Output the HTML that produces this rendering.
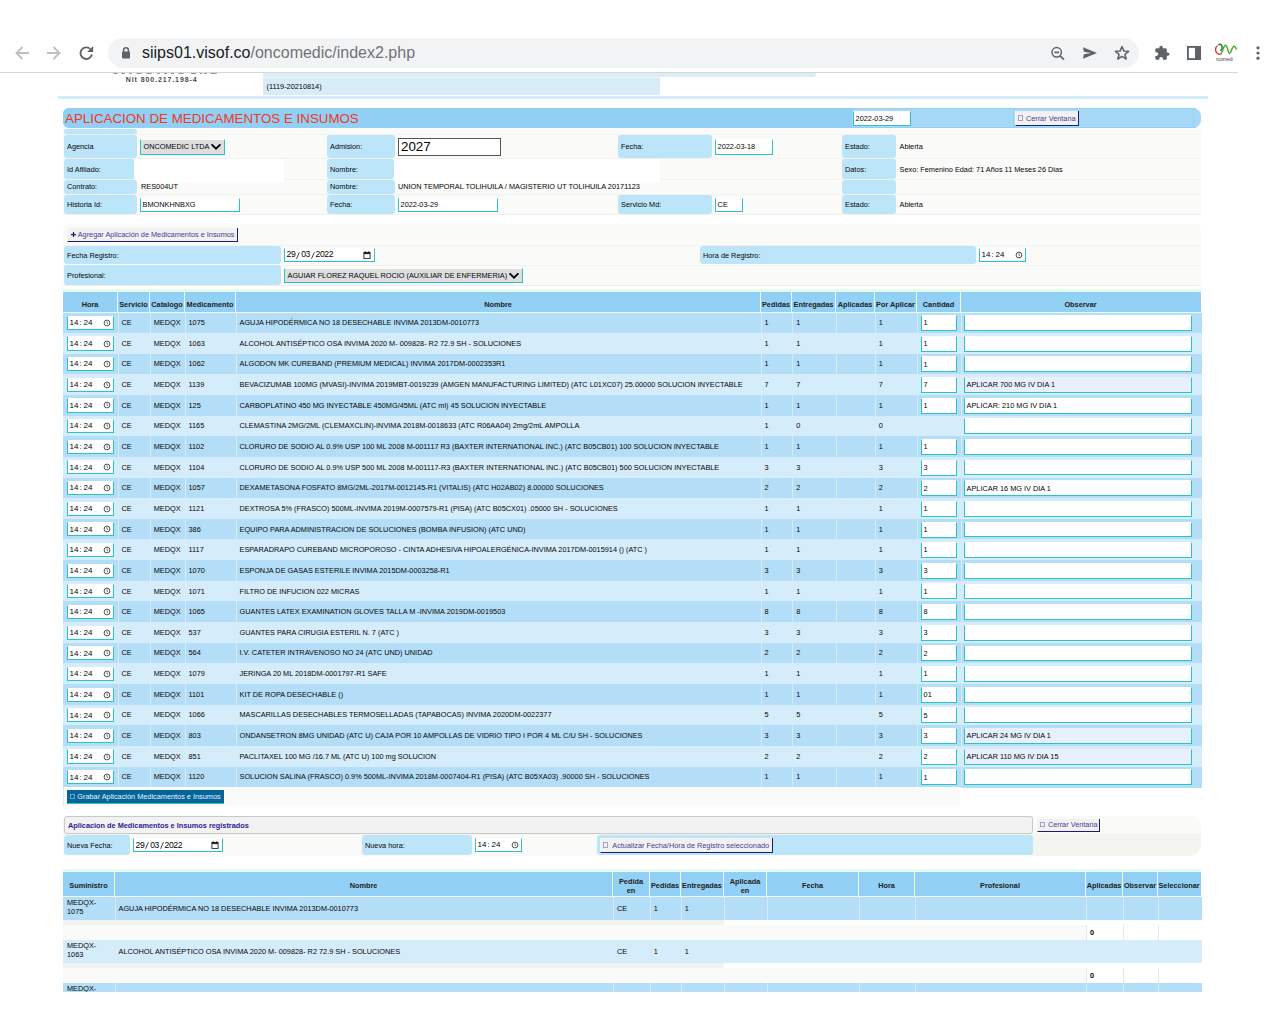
<!DOCTYPE html>
<html><head><meta charset="utf-8"><style>
html,body{margin:0;padding:0;background:#fff;width:1280px;height:1024px;overflow:hidden;position:relative}
body>div,body>svg{position:absolute}
.t{font-family:"Liberation Sans", sans-serif;white-space:nowrap}
.sq{display:inline-block;width:3.1px;height:3.3px;border:0.5px solid currentColor;opacity:.45;margin-right:2.6px;vertical-align:-0.2px}
</style></head><body>
<div style="left:0px;top:0px;width:1280px;height:72px;background:#ffffff;"></div>
<div style="left:0px;top:72px;width:1238px;height:1px;background:#d6d6d6;"></div>
<div style="left:108px;top:38px;width:1031px;height:30px;background:#f1f3f4;border-radius:15px"></div>
<svg style="position:absolute;left:14px;top:45px" width="16" height="16" viewBox="0 0 16 16"><path d="M15 8H2.5M8.5 2L2.5 8L8.5 14" fill="none" stroke="#bdc0c4" stroke-width="1.9"/></svg>
<svg style="position:absolute;left:46px;top:45px" width="16" height="16" viewBox="0 0 16 16"><path d="M1 8H13.5M7.5 2L13.5 8L7.5 14" fill="none" stroke="#bdc0c4" stroke-width="1.9"/></svg>
<svg style="position:absolute;left:78px;top:45px" width="16" height="16" viewBox="0 0 16 16"><path d="M13.9 9.5A5.8 5.8 0 1 1 12.2 3.9" fill="none" stroke="#5f6368" stroke-width="1.9"/><path d="M9.2 6.9L15.1 1.1V6.9Z" fill="#5f6368"/></svg>
<svg style="position:absolute;left:121px;top:46px" width="10" height="13" viewBox="0 0 10 13"><path d="M2.6 6V4.2A2.4 2.4 0 0 1 7.4 4.2V6" fill="none" stroke="#5f6368" stroke-width="1.5"/><rect x="1" y="5.6" width="8" height="6.8" rx="0.8" fill="#5f6368"/></svg>
<div class="t" style="left:142px;top:42.5px;font-size:16px;line-height:20px;color:#202124;letter-spacing:0px">siips01.visof.co<span style="color:#6f7378">/oncomedic/index2.php</span></div>
<svg style="position:absolute;left:1050px;top:45.5px" width="16" height="16" viewBox="0 0 16 16"><circle cx="6.7" cy="6.3" r="4.7" fill="none" stroke="#5f6368" stroke-width="1.5"/><path d="M4.4 6.3H9M10.1 9.8L14 13.7" fill="none" stroke="#5f6368" stroke-width="1.7"/></svg>
<svg style="position:absolute;left:1082px;top:45px" width="16" height="16" viewBox="0 0 16 16"><path d="M1 2.2L15 8L1 13.8L1.9 9.2L9 8L1.9 6.8Z" fill="#5f6368"/></svg>
<svg style="position:absolute;left:1114px;top:45px" width="16" height="16" viewBox="0 0 16 16"><path d="M8 1.6L9.9 6.1L14.6 6.3L10.9 9.3L12.2 14L8 11.3L3.8 14L5.1 9.3L1.4 6.3L6.1 6.1Z" fill="none" stroke="#5f6368" stroke-width="1.5" stroke-linejoin="round"/></svg>
<svg style="position:absolute;left:1153.9px;top:45.2px" width="16.2" height="16.2" viewBox="0 0 24 24"><path d="M20.5 11H19V7c0-1.1-.9-2-2-2h-4V3.5C13 2.12 11.88 1 10.5 1S8 2.12 8 3.5V5H4c-1.1 0-1.99.9-1.99 2v3.8H3.5c1.49 0 2.7 1.21 2.7 2.7s-1.21 2.7-2.7 2.7H2V20c0 1.1.9 2 2 2h3.8v-1.5c0-1.490 1.21-2.7 2.7-2.7 1.49 0 2.7 1.21 2.7 2.7V22H17c1.1 0 2-.9 2-2v-4h1.5c1.38 0 2.5-1.12 2.5-2.5S21.88 11 20.5 11z" fill="#5f6368"/></svg>
<svg style="position:absolute;left:1186px;top:45px" width="16" height="16" viewBox="0 0 16 16"><rect x="1.9" y="1.9" width="12.2" height="12.2" fill="none" stroke="#5f6368" stroke-width="1.9"/><rect x="9" y="2" width="5" height="12" fill="#5f6368"/></svg>
<svg style="position:absolute;left:1210px;top:40px" width="32" height="26" viewBox="0 0 32 26"><path d="M7.6 5.8C4.6 7.5 4.4 13.8 10.7 14.5" fill="none" stroke="#d8322a" stroke-width="1.3"/><path d="M8.4 5.1C10 3.5 12.3 4.5 12.2 8.2C12.1 9.6 11.1 10.3 10.2 10.2" fill="none" stroke="#1d7f2a" stroke-width="1.5"/><path d="M10.7 14.3C12.5 12 13.5 5.3 15.7 5.3C17.5 5.3 18 13.5 19.5 13.5C21 13.5 22 6.3 24.2 6.3C25.4 6.3 26 8 26.4 9.6" fill="none" stroke="#4fa82c" stroke-width="1.5"/><text x="6" y="20.6" font-size="4.6" font-family="Liberation Sans" fill="#444" letter-spacing="-0.1">ncomedi</text></svg>
<svg style="position:absolute;left:1255px;top:45px" width="6" height="16" viewBox="0 0 6 16"><circle cx="3" cy="2.8" r="1.6" fill="#5f6368"/><circle cx="3" cy="8" r="1.6" fill="#5f6368"/><circle cx="3" cy="13.2" r="1.6" fill="#5f6368"/></svg>
<div style="left:112.50px;top:73px;width:5.15px;height:1.4px;background:#8c8c8c;border-radius:0 0 50% 50%"></div>
<div style="left:121.40px;top:73px;width:3.28px;height:1.4px;background:#8c8c8c;border-radius:0 0 50% 50%"></div>
<div style="left:128.90px;top:73px;width:3.28px;height:1.4px;background:#8c8c8c;border-radius:0 0 50% 50%"></div>
<div style="left:136.40px;top:73px;width:6.09px;height:1.4px;background:#8c8c8c;border-radius:0 0 50% 50%"></div>
<div style="left:146.24px;top:73px;width:5.62px;height:1.4px;background:#8c8c8c;border-radius:0 0 50% 50%"></div>
<div style="left:157.01px;top:73px;width:3.28px;height:1.4px;background:#8c8c8c;border-radius:0 0 50% 50%"></div>
<div style="left:163.58px;top:73px;width:3.75px;height:1.4px;background:#8c8c8c;border-radius:0 0 50% 50%"></div>
<div style="left:170.60px;top:73px;width:3.75px;height:1.4px;background:#8c8c8c;border-radius:0 0 50% 50%"></div>
<div style="left:178.10px;top:73px;width:5.62px;height:1.4px;background:#8c8c8c;border-radius:0 0 50% 50%"></div>
<div style="left:190.75px;top:73px;width:5.62px;height:1.4px;background:#8c8c8c;border-radius:0 0 50% 50%"></div>
<div style="left:199.66px;top:73px;width:2.81px;height:1.4px;background:#8c8c8c;border-radius:0 0 50% 50%"></div>
<div style="left:203.88px;top:73px;width:2.81px;height:1.4px;background:#8c8c8c;border-radius:0 0 50% 50%"></div>
<div style="left:209.97px;top:73px;width:7.50px;height:1.4px;background:#8c8c8c;border-radius:0 0 50% 50%"></div>
<div class="t" style="left:125.8px;top:74.84px;font-size:7px;line-height:9.1px;color:#4a4a4a;font-weight:bold;letter-spacing:0.9px">Nit 800.217.198-4</div>
<div style="left:263px;top:73px;width:553px;height:4px;background:#dcedf8;border-bottom-right-radius:3px"></div>
<div style="left:263px;top:77.8px;width:397px;height:17.5px;background:#d8ecf8;"></div>
<div style="left:263px;top:77px;width:397px;height:0.7999999999999972px;background:#eef6fb;"></div>
<div class="t" style="left:266.5px;top:82.14px;font-size:7.33px;line-height:9.53px;color:#050505;font-weight:normal;">(1119-20210814)</div>
<div style="left:58px;top:96px;width:1150px;height:3px;background:#d4ebf8;"></div>
<div style="left:63px;top:108px;width:1138px;height:20px;background:#a6d9f7;border-radius:6px 8px 8px 6px"></div>
<div style="left:63px;top:108px;width:789px;height:20px;background:#92cff4;border-radius:6px 0 0 6px"></div>
<div style="left:852px;top:108px;width:344px;height:1px;background:#94d0f5;"></div>
<div style="left:852px;top:127px;width:344px;height:1px;background:#94d0f5;"></div>
<div style="left:1013px;top:108px;width:1px;height:20px;background:#98d2f4;"></div>
<div style="left:1193px;top:108px;width:1px;height:20px;background:#98d2f4;"></div>
<div class="t" style="left:65px;top:110.06px;font-size:13.33px;line-height:17.33px;color:#ee3a22;font-weight:normal;">APLICACION DE MEDICAMENTOS E INSUMOS</div>
<div style="left:853px;top:111px;width:58px;height:14.5px;background:#fff;box-sizing:border-box;border:1px solid #2cc3c3;border-top-color:#fff"></div>
<div class="t" style="left:855.6px;top:113.57px;font-size:7.33px;line-height:9.53px;color:#050505;font-weight:normal;">2022-03-29</div>
<div style="left:1015px;top:111px;width:64px;height:15px;background:#f1f1f1;box-sizing:border-box;border-right:1.5px solid #1c1c78;border-bottom:1.5px solid #1c1c78;border-left:1px solid #f8f8f8"></div>
<div class="t" style="left:1018.2px;top:113.52px;font-size:7.33px;line-height:9.53px;color:#4a3d96;font-weight:normal;"><span class="sq"></span>Cerrar Ventana</div>
<div style="left:63px;top:128px;width:1138px;height:87px;background:#fafaf8;border-radius:4px"></div>
<div style="left:63px;top:134px;width:1138px;height:0.8000000000000114px;background:#f1f1ed;"></div>
<div style="left:63px;top:158.2px;width:1138px;height:0.8000000000000114px;background:#f1f1ed;"></div>
<div style="left:63px;top:179.2px;width:1138px;height:0.8000000000000114px;background:#f1f1ed;"></div>
<div style="left:63px;top:194.2px;width:1138px;height:0.8000000000000114px;background:#f1f1ed;"></div>
<div style="left:63px;top:214.3px;width:1138px;height:0.6999999999999886px;background:#f1f1ec;"></div>
<div style="left:64px;top:129px;width:73px;height:5px;background:#bde5fa;border-radius:3px"></div>
<div style="left:64px;top:135px;width:73px;height:23px;background:#bde5fa;border-radius:3px"></div>
<div class="t" style="left:67px;top:141.82px;font-size:7.33px;line-height:9.53px;color:#050505;font-weight:normal;">Agencia</div>
<div style="left:140px;top:139px;width:85px;height:16px;background:#dedede;box-sizing:border-box;border:1px solid #2cc3c3;border-top-color:#fff"></div>
<div class="t" style="left:143.5px;top:142.12px;font-size:7.33px;line-height:9.53px;color:#050505;font-weight:normal;">ONCOMEDIC LTDA</div>
<svg style="position:absolute;left:209.7px;top:142.8px" width="12" height="8" viewBox="0 0 12 8"><path d="M1.6 1.4L6 5.6L10.4 1.4" fill="none" stroke="#000" stroke-width="1.9"/></svg>
<div style="left:327px;top:135px;width:68px;height:23px;background:#bde5fa;border-radius:3px"></div>
<div class="t" style="left:330px;top:141.82px;font-size:7.33px;line-height:9.53px;color:#050505;font-weight:normal;">Admision:</div>
<div style="left:398px;top:137.5px;width:103px;height:18.5px;box-sizing:border-box;border:1.3px solid #555;background:#fff"></div>
<div class="t" style="left:401px;top:137.76px;font-size:13.33px;line-height:17.33px;color:#000;font-weight:normal;">2027</div>
<div style="left:618px;top:135px;width:94px;height:23px;background:#bde5fa;border-radius:3px"></div>
<div class="t" style="left:621px;top:141.82px;font-size:7.33px;line-height:9.53px;color:#050505;font-weight:normal;">Fecha:</div>
<div style="left:715px;top:139.3px;width:58px;height:15.699999999999989px;background:#fff;box-sizing:border-box;border:1px solid #2cc3c3;border-top-color:#fff"></div>
<div class="t" style="left:717.6px;top:141.57px;font-size:7.33px;line-height:9.53px;color:#050505;font-weight:normal;">2022-03-18</div>
<div style="left:842px;top:135px;width:54px;height:23px;background:#bde5fa;border-radius:3px"></div>
<div class="t" style="left:845px;top:141.82px;font-size:7.33px;line-height:9.53px;color:#050505;font-weight:normal;">Estado:</div>
<div class="t" style="left:899.5px;top:142.34px;font-size:7.33px;line-height:9.53px;color:#050505;font-weight:normal;">Abierta</div>
<div style="left:64px;top:159px;width:73px;height:20px;background:#bde5fa;border-radius:3px"></div>
<div class="t" style="left:67px;top:165.22px;font-size:7.33px;line-height:9.53px;color:#050505;font-weight:normal;">Id Afiliado:</div>
<div style="left:134px;top:159px;width:150px;height:23px;background:#ffffff;"></div>
<div style="left:327px;top:159px;width:67px;height:20px;background:#bde5fa;border-radius:3px"></div>
<div class="t" style="left:330px;top:165.22px;font-size:7.33px;line-height:9.53px;color:#050505;font-weight:normal;">Nombre:</div>
<div style="left:394px;top:159px;width:266px;height:23px;background:#ffffff;"></div>
<div style="left:842px;top:159px;width:54px;height:20px;background:#bde5fa;border-radius:3px"></div>
<div class="t" style="left:845px;top:165.22px;font-size:7.33px;line-height:9.53px;color:#050505;font-weight:normal;">Datos:</div>
<div class="t" style="left:899.5px;top:164.94px;font-size:7.33px;line-height:9.53px;color:#050505;font-weight:normal;">Sexo: Femenino Edad: 71 Años 11 Meses 26 Dias</div>
<div style="left:64px;top:180.3px;width:73px;height:13.699999999999989px;background:#bde5fa;border-radius:3px"></div>
<div class="t" style="left:67px;top:182.47px;font-size:7.33px;line-height:9.53px;color:#050505;font-weight:normal;">Contrato:</div>
<div class="t" style="left:141px;top:182.44px;font-size:7.33px;line-height:9.53px;color:#050505;font-weight:normal;">RES004UT</div>
<div style="left:327px;top:180.3px;width:68px;height:13.699999999999989px;background:#bde5fa;border-radius:3px"></div>
<div class="t" style="left:330px;top:182.47px;font-size:7.33px;line-height:9.53px;color:#050505;font-weight:normal;">Nombre:</div>
<div class="t" style="left:398px;top:182.44px;font-size:7.33px;line-height:9.53px;color:#050505;font-weight:normal;">UNION TEMPORAL TOLIHUILA / MAGISTERIO UT TOLIHUILA 20171123</div>
<div style="left:842px;top:180.3px;width:54px;height:13.699999999999989px;background:#bde5fa;border-radius:3px"></div>
<div style="left:64px;top:195.2px;width:73px;height:18.80000000000001px;background:#bde5fa;border-radius:3px"></div>
<div class="t" style="left:67px;top:199.92px;font-size:7.33px;line-height:9.53px;color:#050505;font-weight:normal;">Historia Id:</div>
<div style="left:140px;top:197.5px;width:100px;height:14.5px;background:#fff;box-sizing:border-box;border:1px solid #2cc3c3;border-top-color:#fff"></div>
<div class="t" style="left:142.6px;top:200.07px;font-size:7.33px;line-height:9.53px;color:#050505;font-weight:normal;">BMONKHNBXG</div>
<div style="left:327px;top:195.2px;width:68px;height:18.80000000000001px;background:#bde5fa;border-radius:3px"></div>
<div class="t" style="left:330px;top:199.92px;font-size:7.33px;line-height:9.53px;color:#050505;font-weight:normal;">Fecha:</div>
<div style="left:398px;top:197.5px;width:100px;height:14.5px;background:#fff;box-sizing:border-box;border:1px solid #2cc3c3;border-top-color:#fff"></div>
<div class="t" style="left:400.6px;top:200.07px;font-size:7.33px;line-height:9.53px;color:#050505;font-weight:normal;">2022-03-29</div>
<div style="left:618px;top:195.2px;width:94px;height:18.80000000000001px;background:#bde5fa;border-radius:3px"></div>
<div class="t" style="left:621px;top:199.92px;font-size:7.33px;line-height:9.53px;color:#050505;font-weight:normal;">Servicio Md:</div>
<div style="left:715px;top:197.5px;width:28px;height:14.5px;background:#fff;box-sizing:border-box;border:1px solid #2cc3c3;border-top-color:#fff"></div>
<div class="t" style="left:717.6px;top:200.07px;font-size:7.33px;line-height:9.53px;color:#050505;font-weight:normal;">CE</div>
<div style="left:842px;top:195.2px;width:54px;height:18.80000000000001px;background:#bde5fa;border-radius:3px"></div>
<div class="t" style="left:845px;top:199.92px;font-size:7.33px;line-height:9.53px;color:#050505;font-weight:normal;">Estado:</div>
<div class="t" style="left:899.5px;top:199.74px;font-size:7.33px;line-height:9.53px;color:#050505;font-weight:normal;">Abierta</div>
<div style="left:63px;top:224px;width:1138px;height:62px;background:#fafaf8;border-radius:6px"></div>
<div style="left:63px;top:244.5px;width:1138px;height:0.5px;background:#f2f2ef;"></div>
<div style="left:63px;top:264.8px;width:1138px;height:0.5px;background:#f2f2ef;"></div>
<div style="left:63px;top:285.2px;width:1138px;height:0.8000000000000114px;background:#efefea;"></div>
<div style="left:67px;top:227.5px;width:171px;height:14.5px;background:#f1f1f1;box-sizing:border-box;border-right:1.5px solid #1c1c78;border-bottom:1.5px solid #1c1c78;border-left:1px solid #f8f8f8"></div>
<div class="t" style="left:70.2px;top:229.77px;font-size:7.33px;line-height:9.53px;color:#4a3d96;font-weight:normal;"></div>
<div class="t" style="left:77.7px;top:229.94px;font-size:7.33px;line-height:9.53px;color:#4a3d96;font-weight:normal;">Agregar Aplicación de Medicamentos e Insumos</div>
<svg style="position:absolute;left:70.8px;top:232.1px" width="5" height="5" viewBox="0 0 5 5"><path d="M2.5 0V5M0 2.5H5" stroke="#1c1c78" stroke-width="1.25"/></svg>
<div style="left:64px;top:246px;width:217px;height:18px;background:#bde5fa;border-radius:3px"></div>
<div class="t" style="left:67px;top:251.22px;font-size:7.33px;line-height:9.53px;color:#050505;font-weight:normal;">Fecha Registro:</div>
<div style="left:284px;top:248px;width:91px;height:14px;background:#fff;box-sizing:border-box;border:1px solid #2cc3c3;border-top-color:#fff"></div>
<div class="t" style="left:286.5px;top:249.49px;font-size:8.6px;line-height:11.18px;color:#050505;font-weight:normal;letter-spacing:-0.4px">29</div>
<div class="t" style="left:301.2px;top:249.49px;font-size:8.6px;line-height:11.18px;color:#050505;font-weight:normal;letter-spacing:-0.4px">03</div>
<div class="t" style="left:315.6px;top:249.49px;font-size:8.6px;line-height:11.18px;color:#050505;font-weight:normal;letter-spacing:-0.4px">2022</div>
<svg style="position:absolute;left:296.20px;top:251.60px" width="4" height="7" viewBox="0 0 4 7"><path d="M0.5 6.8L3.4 0.2" stroke="#222" stroke-width="0.85"/></svg>
<svg style="position:absolute;left:310.90px;top:251.60px" width="4" height="7" viewBox="0 0 4 7"><path d="M0.5 6.8L3.4 0.2" stroke="#222" stroke-width="0.85"/></svg>
<svg style="position:absolute;left:363.4px;top:251.0px" width="8" height="8" viewBox="0 0 8 8"><rect x="0.9" y="1.4" width="6.2" height="6" fill="none" stroke="#222" stroke-width="0.9"/><rect x="0.9" y="1.2" width="6.2" height="1.9" fill="#222"/><rect x="1.8" y="0.2" width="0.9" height="1.4" fill="#222"/><rect x="5.3" y="0.2" width="0.9" height="1.4" fill="#222"/></svg>
<div style="left:700px;top:246.3px;width:276px;height:17.69999999999999px;background:#bde5fa;border-radius:3px"></div>
<div class="t" style="left:703px;top:251.37px;font-size:7.33px;line-height:9.53px;color:#050505;font-weight:normal;">Hora de Registro:</div>
<div style="left:979px;top:248px;width:47px;height:14px;background:#fff;box-sizing:border-box;border:1px solid #2cc3c3;border-top-color:#fff"></div>
<div class="t" style="left:981.6px;top:250.31px;font-size:8px;line-height:10.4px;color:#050505;font-weight:normal;">14</div>
<div class="t" style="left:991.6px;top:250.31px;font-size:8px;line-height:10.4px;color:#050505;font-weight:normal;">:</div>
<div class="t" style="left:995.6px;top:250.31px;font-size:8px;line-height:10.4px;color:#050505;font-weight:normal;">24</div>
<svg style="position:absolute;left:1015px;top:251.0px" width="8" height="8" viewBox="0 0 8 8"><circle cx="4" cy="4" r="2.9" fill="none" stroke="#333" stroke-width="0.85"/><path d="M4 2.3V4.2L5 5" fill="none" stroke="#333" stroke-width="0.7"/></svg>
<div style="left:64px;top:265.3px;width:217px;height:19.69999999999999px;background:#bde5fa;border-radius:3px"></div>
<div class="t" style="left:67px;top:271.37px;font-size:7.33px;line-height:9.53px;color:#050505;font-weight:normal;">Profesional:</div>
<div style="left:284px;top:268px;width:239px;height:15px;background:#dedede;box-sizing:border-box;border:1px solid #2cc3c3;border-top-color:#fff"></div>
<div class="t" style="left:287.5px;top:270.82px;font-size:7.33px;line-height:9.53px;color:#050505;font-weight:normal;">AGUIAR FLOREZ RAQUEL ROCIO (AUXILIAR DE ENFERMERIA)</div>
<svg style="position:absolute;left:507.70000000000005px;top:271.5px" width="12" height="8" viewBox="0 0 12 8"><path d="M1.6 1.4L6 5.6L10.4 1.4" fill="none" stroke="#000" stroke-width="1.9"/></svg>
<div style="left:63px;top:289px;width:1138px;height:3px;background:#e4fcee;"></div>
<div style="left:63px;top:292px;width:1138px;height:20px;background:#92d0f5;"></div>
<div style="left:117px;top:292px;width:1px;height:20px;background:#eefaf6;"></div>
<div style="left:149px;top:292px;width:1px;height:20px;background:#eefaf6;"></div>
<div style="left:184px;top:292px;width:1px;height:20px;background:#eefaf6;"></div>
<div style="left:235px;top:292px;width:1px;height:20px;background:#eefaf6;"></div>
<div style="left:760px;top:292px;width:1px;height:20px;background:#eefaf6;"></div>
<div style="left:791px;top:292px;width:1px;height:20px;background:#eefaf6;"></div>
<div style="left:835px;top:292px;width:1px;height:20px;background:#eefaf6;"></div>
<div style="left:874px;top:292px;width:1px;height:20px;background:#eefaf6;"></div>
<div style="left:916px;top:292px;width:1px;height:20px;background:#eefaf6;"></div>
<div style="left:960px;top:292px;width:1px;height:20px;background:#eefaf6;"></div>
<div class="t" style="left:63px;width:54px;text-align:center;top:299.74px;font-size:7.33px;line-height:9.53px;color:#222;font-weight:bold">Hora</div>
<div class="t" style="left:118px;width:31px;text-align:center;top:299.74px;font-size:7.33px;line-height:9.53px;color:#222;font-weight:bold">Servicio</div>
<div class="t" style="left:150px;width:34px;text-align:center;top:299.74px;font-size:7.33px;line-height:9.53px;color:#222;font-weight:bold">Catalogo</div>
<div class="t" style="left:185px;width:50px;text-align:center;top:299.74px;font-size:7.33px;line-height:9.53px;color:#222;font-weight:bold">Medicamento</div>
<div class="t" style="left:236px;width:524px;text-align:center;top:299.74px;font-size:7.33px;line-height:9.53px;color:#222;font-weight:bold">Nombre</div>
<div class="t" style="left:761px;width:30px;text-align:center;top:299.74px;font-size:7.33px;line-height:9.53px;color:#222;font-weight:bold">Pedidas</div>
<div class="t" style="left:792px;width:43px;text-align:center;top:299.74px;font-size:7.33px;line-height:9.53px;color:#222;font-weight:bold">Entregadas</div>
<div class="t" style="left:836px;width:38px;text-align:center;top:299.74px;font-size:7.33px;line-height:9.53px;color:#222;font-weight:bold">Aplicadas</div>
<div class="t" style="left:875px;width:41px;text-align:center;top:299.74px;font-size:7.33px;line-height:9.53px;color:#222;font-weight:bold">Por Aplicar</div>
<div class="t" style="left:917px;width:43px;text-align:center;top:299.74px;font-size:7.33px;line-height:9.53px;color:#222;font-weight:bold">Cantidad</div>
<div class="t" style="left:961px;width:239px;text-align:center;top:299.74px;font-size:7.33px;line-height:9.53px;color:#222;font-weight:bold">Observar</div>
<div style="left:63px;top:312.30px;width:1139px;height:20.95px;background:#b4def7"></div>
<div style="left:118px;top:312.30px;width:1px;height:20.95px;background:#d5ecfa"></div>
<div style="left:150px;top:312.30px;width:1px;height:20.95px;background:#d5ecfa"></div>
<div style="left:185px;top:312.30px;width:1px;height:20.95px;background:#d5ecfa"></div>
<div style="left:236px;top:312.30px;width:1px;height:20.95px;background:#d5ecfa"></div>
<div style="left:761px;top:312.30px;width:1px;height:20.95px;background:#d5ecfa"></div>
<div style="left:792px;top:312.30px;width:1px;height:20.95px;background:#d5ecfa"></div>
<div style="left:836px;top:312.30px;width:1px;height:20.95px;background:#d5ecfa"></div>
<div style="left:875px;top:312.30px;width:1px;height:20.95px;background:#d5ecfa"></div>
<div style="left:917px;top:312.30px;width:1px;height:20.95px;background:#d5ecfa"></div>
<div style="left:961px;top:312.30px;width:1px;height:20.95px;background:#d5ecfa"></div>
<div style="left:67px;top:315.8px;width:47px;height:14.100000000000023px;background:#fff;box-sizing:border-box;border:1px solid #2cc3c3;border-top-color:#fff"></div>
<div class="t" style="left:69.6px;top:318.16px;font-size:8px;line-height:10.4px;color:#050505;font-weight:normal;">14</div>
<div class="t" style="left:79.6px;top:318.16px;font-size:8px;line-height:10.4px;color:#050505;font-weight:normal;">:</div>
<div class="t" style="left:83.6px;top:318.16px;font-size:8px;line-height:10.4px;color:#050505;font-weight:normal;">24</div>
<svg style="position:absolute;left:103px;top:318.85px" width="8" height="8" viewBox="0 0 8 8"><circle cx="4" cy="4" r="2.9" fill="none" stroke="#333" stroke-width="0.85"/><path d="M4 2.3V4.2L5 5" fill="none" stroke="#333" stroke-width="0.7"/></svg>
<div class="t" style="left:121.5px;top:318.04px;font-size:7.33px;line-height:9.53px;color:#050505;font-weight:normal;">CE</div>
<div class="t" style="left:153.7px;top:318.04px;font-size:7.33px;line-height:9.53px;color:#050505;font-weight:normal;">MEDQX</div>
<div class="t" style="left:188.5px;top:318.04px;font-size:7.33px;line-height:9.53px;color:#050505;font-weight:normal;">1075</div>
<div class="t" style="left:239.5px;top:318.04px;font-size:7.33px;line-height:9.53px;color:#050505;font-weight:normal;">AGUJA HIPODÉRMICA NO 18 DESECHABLE INVIMA 2013DM-0010773</div>
<div class="t" style="left:764.5px;top:318.04px;font-size:7.33px;line-height:9.53px;color:#050505;font-weight:normal;">1</div>
<div class="t" style="left:796.3px;top:318.04px;font-size:7.33px;line-height:9.53px;color:#050505;font-weight:normal;">1</div>
<div class="t" style="left:878.8px;top:318.04px;font-size:7.33px;line-height:9.53px;color:#050505;font-weight:normal;">1</div>
<div style="left:921px;top:315.0px;width:36px;height:16.0px;background:#fff;box-sizing:border-box;border:1px solid #2cc3c3;border-top-color:#fff"></div>
<div class="t" style="left:923.6px;top:318.32px;font-size:7.33px;line-height:9.53px;color:#050505;font-weight:normal;">1</div>
<div style="left:964px;top:315.1px;width:228px;height:15.800000000000011px;background:#fff;box-sizing:border-box;border:1px solid #2cc3c3;border-top-color:#fff"></div>
<div style="left:63px;top:332.95px;width:1139px;height:20.95px;background:#d5ecfa"></div>
<div style="left:118px;top:332.95px;width:1px;height:20.95px;background:#d5ecfa"></div>
<div style="left:150px;top:332.95px;width:1px;height:20.95px;background:#d5ecfa"></div>
<div style="left:185px;top:332.95px;width:1px;height:20.95px;background:#d5ecfa"></div>
<div style="left:236px;top:332.95px;width:1px;height:20.95px;background:#d5ecfa"></div>
<div style="left:761px;top:332.95px;width:1px;height:20.95px;background:#d5ecfa"></div>
<div style="left:792px;top:332.95px;width:1px;height:20.95px;background:#d5ecfa"></div>
<div style="left:836px;top:332.95px;width:1px;height:20.95px;background:#d5ecfa"></div>
<div style="left:875px;top:332.95px;width:1px;height:20.95px;background:#d5ecfa"></div>
<div style="left:917px;top:332.95px;width:1px;height:20.95px;background:#d5ecfa"></div>
<div style="left:961px;top:332.95px;width:1px;height:20.95px;background:#d5ecfa"></div>
<div style="left:67px;top:336.4521739130435px;width:47px;height:14.100000000000023px;background:#fff;box-sizing:border-box;border:1px solid #2cc3c3;border-top-color:#fff"></div>
<div class="t" style="left:69.6px;top:338.81px;font-size:8px;line-height:10.4px;color:#050505;font-weight:normal;">14</div>
<div class="t" style="left:79.6px;top:338.81px;font-size:8px;line-height:10.4px;color:#050505;font-weight:normal;">:</div>
<div class="t" style="left:83.6px;top:338.81px;font-size:8px;line-height:10.4px;color:#050505;font-weight:normal;">24</div>
<svg style="position:absolute;left:103px;top:339.5021739130435px" width="8" height="8" viewBox="0 0 8 8"><circle cx="4" cy="4" r="2.9" fill="none" stroke="#333" stroke-width="0.85"/><path d="M4 2.3V4.2L5 5" fill="none" stroke="#333" stroke-width="0.7"/></svg>
<div class="t" style="left:121.5px;top:338.70px;font-size:7.33px;line-height:9.53px;color:#050505;font-weight:normal;">CE</div>
<div class="t" style="left:153.7px;top:338.70px;font-size:7.33px;line-height:9.53px;color:#050505;font-weight:normal;">MEDQX</div>
<div class="t" style="left:188.5px;top:338.70px;font-size:7.33px;line-height:9.53px;color:#050505;font-weight:normal;">1063</div>
<div class="t" style="left:239.5px;top:338.70px;font-size:7.33px;line-height:9.53px;color:#050505;font-weight:normal;">ALCOHOL ANTISÉPTICO OSA INVIMA 2020 M- 009828- R2 72.9 SH - SOLUCIONES</div>
<div class="t" style="left:764.5px;top:338.70px;font-size:7.33px;line-height:9.53px;color:#050505;font-weight:normal;">1</div>
<div class="t" style="left:796.3px;top:338.70px;font-size:7.33px;line-height:9.53px;color:#050505;font-weight:normal;">1</div>
<div class="t" style="left:878.8px;top:338.70px;font-size:7.33px;line-height:9.53px;color:#050505;font-weight:normal;">1</div>
<div style="left:921px;top:335.6521739130435px;width:36px;height:16.0px;background:#fff;box-sizing:border-box;border:1px solid #2cc3c3;border-top-color:#fff"></div>
<div class="t" style="left:923.6px;top:338.97px;font-size:7.33px;line-height:9.53px;color:#050505;font-weight:normal;">1</div>
<div style="left:964px;top:335.7521739130435px;width:228px;height:15.800000000000011px;background:#fff;box-sizing:border-box;border:1px solid #2cc3c3;border-top-color:#fff"></div>
<div style="left:63px;top:353.60px;width:1139px;height:20.95px;background:#b4def7"></div>
<div style="left:118px;top:353.60px;width:1px;height:20.95px;background:#d5ecfa"></div>
<div style="left:150px;top:353.60px;width:1px;height:20.95px;background:#d5ecfa"></div>
<div style="left:185px;top:353.60px;width:1px;height:20.95px;background:#d5ecfa"></div>
<div style="left:236px;top:353.60px;width:1px;height:20.95px;background:#d5ecfa"></div>
<div style="left:761px;top:353.60px;width:1px;height:20.95px;background:#d5ecfa"></div>
<div style="left:792px;top:353.60px;width:1px;height:20.95px;background:#d5ecfa"></div>
<div style="left:836px;top:353.60px;width:1px;height:20.95px;background:#d5ecfa"></div>
<div style="left:875px;top:353.60px;width:1px;height:20.95px;background:#d5ecfa"></div>
<div style="left:917px;top:353.60px;width:1px;height:20.95px;background:#d5ecfa"></div>
<div style="left:961px;top:353.60px;width:1px;height:20.95px;background:#d5ecfa"></div>
<div style="left:67px;top:357.10434782608695px;width:47px;height:14.100000000000023px;background:#fff;box-sizing:border-box;border:1px solid #2cc3c3;border-top-color:#fff"></div>
<div class="t" style="left:69.6px;top:359.46px;font-size:8px;line-height:10.4px;color:#050505;font-weight:normal;">14</div>
<div class="t" style="left:79.6px;top:359.46px;font-size:8px;line-height:10.4px;color:#050505;font-weight:normal;">:</div>
<div class="t" style="left:83.6px;top:359.46px;font-size:8px;line-height:10.4px;color:#050505;font-weight:normal;">24</div>
<svg style="position:absolute;left:103px;top:360.15434782608696px" width="8" height="8" viewBox="0 0 8 8"><circle cx="4" cy="4" r="2.9" fill="none" stroke="#333" stroke-width="0.85"/><path d="M4 2.3V4.2L5 5" fill="none" stroke="#333" stroke-width="0.7"/></svg>
<div class="t" style="left:121.5px;top:359.35px;font-size:7.33px;line-height:9.53px;color:#050505;font-weight:normal;">CE</div>
<div class="t" style="left:153.7px;top:359.35px;font-size:7.33px;line-height:9.53px;color:#050505;font-weight:normal;">MEDQX</div>
<div class="t" style="left:188.5px;top:359.35px;font-size:7.33px;line-height:9.53px;color:#050505;font-weight:normal;">1062</div>
<div class="t" style="left:239.5px;top:359.35px;font-size:7.33px;line-height:9.53px;color:#050505;font-weight:normal;">ALGODON MK CUREBAND (PREMIUM MEDICAL) INVIMA 2017DM-0002353R1</div>
<div class="t" style="left:764.5px;top:359.35px;font-size:7.33px;line-height:9.53px;color:#050505;font-weight:normal;">1</div>
<div class="t" style="left:796.3px;top:359.35px;font-size:7.33px;line-height:9.53px;color:#050505;font-weight:normal;">1</div>
<div class="t" style="left:878.8px;top:359.35px;font-size:7.33px;line-height:9.53px;color:#050505;font-weight:normal;">1</div>
<div style="left:921px;top:356.30434782608694px;width:36px;height:16.0px;background:#fff;box-sizing:border-box;border:1px solid #2cc3c3;border-top-color:#fff"></div>
<div class="t" style="left:923.6px;top:359.62px;font-size:7.33px;line-height:9.53px;color:#050505;font-weight:normal;">1</div>
<div style="left:964px;top:356.40434782608696px;width:228px;height:15.800000000000011px;background:#fff;box-sizing:border-box;border:1px solid #2cc3c3;border-top-color:#fff"></div>
<div style="left:63px;top:374.26px;width:1139px;height:20.95px;background:#d5ecfa"></div>
<div style="left:118px;top:374.26px;width:1px;height:20.95px;background:#d5ecfa"></div>
<div style="left:150px;top:374.26px;width:1px;height:20.95px;background:#d5ecfa"></div>
<div style="left:185px;top:374.26px;width:1px;height:20.95px;background:#d5ecfa"></div>
<div style="left:236px;top:374.26px;width:1px;height:20.95px;background:#d5ecfa"></div>
<div style="left:761px;top:374.26px;width:1px;height:20.95px;background:#d5ecfa"></div>
<div style="left:792px;top:374.26px;width:1px;height:20.95px;background:#d5ecfa"></div>
<div style="left:836px;top:374.26px;width:1px;height:20.95px;background:#d5ecfa"></div>
<div style="left:875px;top:374.26px;width:1px;height:20.95px;background:#d5ecfa"></div>
<div style="left:917px;top:374.26px;width:1px;height:20.95px;background:#d5ecfa"></div>
<div style="left:961px;top:374.26px;width:1px;height:20.95px;background:#d5ecfa"></div>
<div style="left:67px;top:377.75652173913045px;width:47px;height:14.100000000000023px;background:#fff;box-sizing:border-box;border:1px solid #2cc3c3;border-top-color:#fff"></div>
<div class="t" style="left:69.6px;top:380.11px;font-size:8px;line-height:10.4px;color:#050505;font-weight:normal;">14</div>
<div class="t" style="left:79.6px;top:380.11px;font-size:8px;line-height:10.4px;color:#050505;font-weight:normal;">:</div>
<div class="t" style="left:83.6px;top:380.11px;font-size:8px;line-height:10.4px;color:#050505;font-weight:normal;">24</div>
<svg style="position:absolute;left:103px;top:380.80652173913046px" width="8" height="8" viewBox="0 0 8 8"><circle cx="4" cy="4" r="2.9" fill="none" stroke="#333" stroke-width="0.85"/><path d="M4 2.3V4.2L5 5" fill="none" stroke="#333" stroke-width="0.7"/></svg>
<div class="t" style="left:121.5px;top:380.00px;font-size:7.33px;line-height:9.53px;color:#050505;font-weight:normal;">CE</div>
<div class="t" style="left:153.7px;top:380.00px;font-size:7.33px;line-height:9.53px;color:#050505;font-weight:normal;">MEDQX</div>
<div class="t" style="left:188.5px;top:380.00px;font-size:7.33px;line-height:9.53px;color:#050505;font-weight:normal;">1139</div>
<div class="t" style="left:239.5px;top:380.00px;font-size:7.33px;line-height:9.53px;color:#050505;font-weight:normal;">BEVACIZUMAB 100MG (MVASI)-INVIMA 2019MBT-0019239 (AMGEN MANUFACTURING LIMITED) (ATC L01XC07) 25.00000 SOLUCION INYECTABLE</div>
<div class="t" style="left:764.5px;top:380.00px;font-size:7.33px;line-height:9.53px;color:#050505;font-weight:normal;">7</div>
<div class="t" style="left:796.3px;top:380.00px;font-size:7.33px;line-height:9.53px;color:#050505;font-weight:normal;">7</div>
<div class="t" style="left:878.8px;top:380.00px;font-size:7.33px;line-height:9.53px;color:#050505;font-weight:normal;">7</div>
<div style="left:921px;top:376.95652173913044px;width:36px;height:16.0px;background:#fff;box-sizing:border-box;border:1px solid #2cc3c3;border-top-color:#fff"></div>
<div class="t" style="left:923.6px;top:380.28px;font-size:7.33px;line-height:9.53px;color:#050505;font-weight:normal;">7</div>
<div style="left:964px;top:377.05652173913046px;width:228px;height:15.800000000000011px;background:#e8f0fe;box-sizing:border-box;border:1px solid #2cc3c3;border-top-color:#e8f0fe"></div>
<div class="t" style="left:966.6px;top:380.28px;font-size:7.33px;line-height:9.53px;color:#050505;font-weight:normal;">APLICAR 700 MG IV DIA 1</div>
<div style="left:63px;top:394.91px;width:1139px;height:20.95px;background:#b4def7"></div>
<div style="left:118px;top:394.91px;width:1px;height:20.95px;background:#d5ecfa"></div>
<div style="left:150px;top:394.91px;width:1px;height:20.95px;background:#d5ecfa"></div>
<div style="left:185px;top:394.91px;width:1px;height:20.95px;background:#d5ecfa"></div>
<div style="left:236px;top:394.91px;width:1px;height:20.95px;background:#d5ecfa"></div>
<div style="left:761px;top:394.91px;width:1px;height:20.95px;background:#d5ecfa"></div>
<div style="left:792px;top:394.91px;width:1px;height:20.95px;background:#d5ecfa"></div>
<div style="left:836px;top:394.91px;width:1px;height:20.95px;background:#d5ecfa"></div>
<div style="left:875px;top:394.91px;width:1px;height:20.95px;background:#d5ecfa"></div>
<div style="left:917px;top:394.91px;width:1px;height:20.95px;background:#d5ecfa"></div>
<div style="left:961px;top:394.91px;width:1px;height:20.95px;background:#d5ecfa"></div>
<div style="left:67px;top:398.40869565217395px;width:47px;height:14.100000000000023px;background:#fff;box-sizing:border-box;border:1px solid #2cc3c3;border-top-color:#fff"></div>
<div class="t" style="left:69.6px;top:400.76px;font-size:8px;line-height:10.4px;color:#050505;font-weight:normal;">14</div>
<div class="t" style="left:79.6px;top:400.76px;font-size:8px;line-height:10.4px;color:#050505;font-weight:normal;">:</div>
<div class="t" style="left:83.6px;top:400.76px;font-size:8px;line-height:10.4px;color:#050505;font-weight:normal;">24</div>
<svg style="position:absolute;left:103px;top:401.45869565217396px" width="8" height="8" viewBox="0 0 8 8"><circle cx="4" cy="4" r="2.9" fill="none" stroke="#333" stroke-width="0.85"/><path d="M4 2.3V4.2L5 5" fill="none" stroke="#333" stroke-width="0.7"/></svg>
<div class="t" style="left:121.5px;top:400.65px;font-size:7.33px;line-height:9.53px;color:#050505;font-weight:normal;">CE</div>
<div class="t" style="left:153.7px;top:400.65px;font-size:7.33px;line-height:9.53px;color:#050505;font-weight:normal;">MEDQX</div>
<div class="t" style="left:188.5px;top:400.65px;font-size:7.33px;line-height:9.53px;color:#050505;font-weight:normal;">125</div>
<div class="t" style="left:239.5px;top:400.65px;font-size:7.33px;line-height:9.53px;color:#050505;font-weight:normal;">CARBOPLATINO 450 MG INYECTABLE 450MG/45ML (ATC ml) 45 SOLUCION INYECTABLE</div>
<div class="t" style="left:764.5px;top:400.65px;font-size:7.33px;line-height:9.53px;color:#050505;font-weight:normal;">1</div>
<div class="t" style="left:796.3px;top:400.65px;font-size:7.33px;line-height:9.53px;color:#050505;font-weight:normal;">1</div>
<div class="t" style="left:878.8px;top:400.65px;font-size:7.33px;line-height:9.53px;color:#050505;font-weight:normal;">1</div>
<div style="left:921px;top:397.60869565217394px;width:36px;height:16.0px;background:#fff;box-sizing:border-box;border:1px solid #2cc3c3;border-top-color:#fff"></div>
<div class="t" style="left:923.6px;top:400.93px;font-size:7.33px;line-height:9.53px;color:#050505;font-weight:normal;">1</div>
<div style="left:964px;top:397.70869565217396px;width:228px;height:15.800000000000011px;background:#fff;box-sizing:border-box;border:1px solid #2cc3c3;border-top-color:#fff"></div>
<div class="t" style="left:966.6px;top:400.93px;font-size:7.33px;line-height:9.53px;color:#050505;font-weight:normal;">APLICAR: 210 MG IV DIA 1</div>
<div style="left:63px;top:415.56px;width:1139px;height:20.95px;background:#d5ecfa"></div>
<div style="left:118px;top:415.56px;width:1px;height:20.95px;background:#d5ecfa"></div>
<div style="left:150px;top:415.56px;width:1px;height:20.95px;background:#d5ecfa"></div>
<div style="left:185px;top:415.56px;width:1px;height:20.95px;background:#d5ecfa"></div>
<div style="left:236px;top:415.56px;width:1px;height:20.95px;background:#d5ecfa"></div>
<div style="left:761px;top:415.56px;width:1px;height:20.95px;background:#d5ecfa"></div>
<div style="left:792px;top:415.56px;width:1px;height:20.95px;background:#d5ecfa"></div>
<div style="left:836px;top:415.56px;width:1px;height:20.95px;background:#d5ecfa"></div>
<div style="left:875px;top:415.56px;width:1px;height:20.95px;background:#d5ecfa"></div>
<div style="left:917px;top:415.56px;width:1px;height:20.95px;background:#d5ecfa"></div>
<div style="left:961px;top:415.56px;width:1px;height:20.95px;background:#d5ecfa"></div>
<div style="left:67px;top:419.0608695652174px;width:47px;height:14.100000000000023px;background:#fff;box-sizing:border-box;border:1px solid #2cc3c3;border-top-color:#fff"></div>
<div class="t" style="left:69.6px;top:421.42px;font-size:8px;line-height:10.4px;color:#050505;font-weight:normal;">14</div>
<div class="t" style="left:79.6px;top:421.42px;font-size:8px;line-height:10.4px;color:#050505;font-weight:normal;">:</div>
<div class="t" style="left:83.6px;top:421.42px;font-size:8px;line-height:10.4px;color:#050505;font-weight:normal;">24</div>
<svg style="position:absolute;left:103px;top:422.1108695652174px" width="8" height="8" viewBox="0 0 8 8"><circle cx="4" cy="4" r="2.9" fill="none" stroke="#333" stroke-width="0.85"/><path d="M4 2.3V4.2L5 5" fill="none" stroke="#333" stroke-width="0.7"/></svg>
<div class="t" style="left:121.5px;top:421.30px;font-size:7.33px;line-height:9.53px;color:#050505;font-weight:normal;">CE</div>
<div class="t" style="left:153.7px;top:421.30px;font-size:7.33px;line-height:9.53px;color:#050505;font-weight:normal;">MEDQX</div>
<div class="t" style="left:188.5px;top:421.30px;font-size:7.33px;line-height:9.53px;color:#050505;font-weight:normal;">1165</div>
<div class="t" style="left:239.5px;top:421.30px;font-size:7.33px;line-height:9.53px;color:#050505;font-weight:normal;">CLEMASTINA 2MG/2ML (CLEMAXCLIN)-INVIMA 2018M-0018633 (ATC R06AA04) 2mg/2mL AMPOLLA</div>
<div class="t" style="left:764.5px;top:421.30px;font-size:7.33px;line-height:9.53px;color:#050505;font-weight:normal;">1</div>
<div class="t" style="left:796.3px;top:421.30px;font-size:7.33px;line-height:9.53px;color:#050505;font-weight:normal;">0</div>
<div class="t" style="left:878.8px;top:421.30px;font-size:7.33px;line-height:9.53px;color:#050505;font-weight:normal;">0</div>
<div style="left:964px;top:418.3608695652174px;width:228px;height:15.800000000000011px;background:#fff;box-sizing:border-box;border:1px solid #2cc3c3;border-top-color:#fff"></div>
<div style="left:63px;top:436.21px;width:1139px;height:20.95px;background:#b4def7"></div>
<div style="left:118px;top:436.21px;width:1px;height:20.95px;background:#d5ecfa"></div>
<div style="left:150px;top:436.21px;width:1px;height:20.95px;background:#d5ecfa"></div>
<div style="left:185px;top:436.21px;width:1px;height:20.95px;background:#d5ecfa"></div>
<div style="left:236px;top:436.21px;width:1px;height:20.95px;background:#d5ecfa"></div>
<div style="left:761px;top:436.21px;width:1px;height:20.95px;background:#d5ecfa"></div>
<div style="left:792px;top:436.21px;width:1px;height:20.95px;background:#d5ecfa"></div>
<div style="left:836px;top:436.21px;width:1px;height:20.95px;background:#d5ecfa"></div>
<div style="left:875px;top:436.21px;width:1px;height:20.95px;background:#d5ecfa"></div>
<div style="left:917px;top:436.21px;width:1px;height:20.95px;background:#d5ecfa"></div>
<div style="left:961px;top:436.21px;width:1px;height:20.95px;background:#d5ecfa"></div>
<div style="left:67px;top:439.7130434782609px;width:47px;height:14.100000000000023px;background:#fff;box-sizing:border-box;border:1px solid #2cc3c3;border-top-color:#fff"></div>
<div class="t" style="left:69.6px;top:442.07px;font-size:8px;line-height:10.4px;color:#050505;font-weight:normal;">14</div>
<div class="t" style="left:79.6px;top:442.07px;font-size:8px;line-height:10.4px;color:#050505;font-weight:normal;">:</div>
<div class="t" style="left:83.6px;top:442.07px;font-size:8px;line-height:10.4px;color:#050505;font-weight:normal;">24</div>
<svg style="position:absolute;left:103px;top:442.7630434782609px" width="8" height="8" viewBox="0 0 8 8"><circle cx="4" cy="4" r="2.9" fill="none" stroke="#333" stroke-width="0.85"/><path d="M4 2.3V4.2L5 5" fill="none" stroke="#333" stroke-width="0.7"/></svg>
<div class="t" style="left:121.5px;top:441.96px;font-size:7.33px;line-height:9.53px;color:#050505;font-weight:normal;">CE</div>
<div class="t" style="left:153.7px;top:441.96px;font-size:7.33px;line-height:9.53px;color:#050505;font-weight:normal;">MEDQX</div>
<div class="t" style="left:188.5px;top:441.96px;font-size:7.33px;line-height:9.53px;color:#050505;font-weight:normal;">1102</div>
<div class="t" style="left:239.5px;top:441.96px;font-size:7.33px;line-height:9.53px;color:#050505;font-weight:normal;">CLORURO DE SODIO AL 0.9% USP 100 ML 2008 M-001117 R3 (BAXTER INTERNATIONAL INC.) (ATC B05CB01) 100 SOLUCION INYECTABLE</div>
<div class="t" style="left:764.5px;top:441.96px;font-size:7.33px;line-height:9.53px;color:#050505;font-weight:normal;">1</div>
<div class="t" style="left:796.3px;top:441.96px;font-size:7.33px;line-height:9.53px;color:#050505;font-weight:normal;">1</div>
<div class="t" style="left:878.8px;top:441.96px;font-size:7.33px;line-height:9.53px;color:#050505;font-weight:normal;">1</div>
<div style="left:921px;top:438.9130434782609px;width:36px;height:16.0px;background:#fff;box-sizing:border-box;border:1px solid #2cc3c3;border-top-color:#fff"></div>
<div class="t" style="left:923.6px;top:442.23px;font-size:7.33px;line-height:9.53px;color:#050505;font-weight:normal;">1</div>
<div style="left:964px;top:439.0130434782609px;width:228px;height:15.800000000000011px;background:#fff;box-sizing:border-box;border:1px solid #2cc3c3;border-top-color:#fff"></div>
<div style="left:63px;top:456.87px;width:1139px;height:20.95px;background:#d5ecfa"></div>
<div style="left:118px;top:456.87px;width:1px;height:20.95px;background:#d5ecfa"></div>
<div style="left:150px;top:456.87px;width:1px;height:20.95px;background:#d5ecfa"></div>
<div style="left:185px;top:456.87px;width:1px;height:20.95px;background:#d5ecfa"></div>
<div style="left:236px;top:456.87px;width:1px;height:20.95px;background:#d5ecfa"></div>
<div style="left:761px;top:456.87px;width:1px;height:20.95px;background:#d5ecfa"></div>
<div style="left:792px;top:456.87px;width:1px;height:20.95px;background:#d5ecfa"></div>
<div style="left:836px;top:456.87px;width:1px;height:20.95px;background:#d5ecfa"></div>
<div style="left:875px;top:456.87px;width:1px;height:20.95px;background:#d5ecfa"></div>
<div style="left:917px;top:456.87px;width:1px;height:20.95px;background:#d5ecfa"></div>
<div style="left:961px;top:456.87px;width:1px;height:20.95px;background:#d5ecfa"></div>
<div style="left:67px;top:460.3652173913043px;width:47px;height:14.100000000000023px;background:#fff;box-sizing:border-box;border:1px solid #2cc3c3;border-top-color:#fff"></div>
<div class="t" style="left:69.6px;top:462.72px;font-size:8px;line-height:10.4px;color:#050505;font-weight:normal;">14</div>
<div class="t" style="left:79.6px;top:462.72px;font-size:8px;line-height:10.4px;color:#050505;font-weight:normal;">:</div>
<div class="t" style="left:83.6px;top:462.72px;font-size:8px;line-height:10.4px;color:#050505;font-weight:normal;">24</div>
<svg style="position:absolute;left:103px;top:463.41521739130434px" width="8" height="8" viewBox="0 0 8 8"><circle cx="4" cy="4" r="2.9" fill="none" stroke="#333" stroke-width="0.85"/><path d="M4 2.3V4.2L5 5" fill="none" stroke="#333" stroke-width="0.7"/></svg>
<div class="t" style="left:121.5px;top:462.61px;font-size:7.33px;line-height:9.53px;color:#050505;font-weight:normal;">CE</div>
<div class="t" style="left:153.7px;top:462.61px;font-size:7.33px;line-height:9.53px;color:#050505;font-weight:normal;">MEDQX</div>
<div class="t" style="left:188.5px;top:462.61px;font-size:7.33px;line-height:9.53px;color:#050505;font-weight:normal;">1104</div>
<div class="t" style="left:239.5px;top:462.61px;font-size:7.33px;line-height:9.53px;color:#050505;font-weight:normal;">CLORURO DE SODIO AL 0.9% USP 500 ML 2008 M-001117-R3 (BAXTER INTERNATIONAL INC.) (ATC B05CB01) 500 SOLUCION INYECTABLE</div>
<div class="t" style="left:764.5px;top:462.61px;font-size:7.33px;line-height:9.53px;color:#050505;font-weight:normal;">3</div>
<div class="t" style="left:796.3px;top:462.61px;font-size:7.33px;line-height:9.53px;color:#050505;font-weight:normal;">3</div>
<div class="t" style="left:878.8px;top:462.61px;font-size:7.33px;line-height:9.53px;color:#050505;font-weight:normal;">3</div>
<div style="left:921px;top:459.5652173913043px;width:36px;height:16.0px;background:#fff;box-sizing:border-box;border:1px solid #2cc3c3;border-top-color:#fff"></div>
<div class="t" style="left:923.6px;top:462.88px;font-size:7.33px;line-height:9.53px;color:#050505;font-weight:normal;">3</div>
<div style="left:964px;top:459.66521739130434px;width:228px;height:15.800000000000011px;background:#fff;box-sizing:border-box;border:1px solid #2cc3c3;border-top-color:#fff"></div>
<div style="left:63px;top:477.52px;width:1139px;height:20.95px;background:#b4def7"></div>
<div style="left:118px;top:477.52px;width:1px;height:20.95px;background:#d5ecfa"></div>
<div style="left:150px;top:477.52px;width:1px;height:20.95px;background:#d5ecfa"></div>
<div style="left:185px;top:477.52px;width:1px;height:20.95px;background:#d5ecfa"></div>
<div style="left:236px;top:477.52px;width:1px;height:20.95px;background:#d5ecfa"></div>
<div style="left:761px;top:477.52px;width:1px;height:20.95px;background:#d5ecfa"></div>
<div style="left:792px;top:477.52px;width:1px;height:20.95px;background:#d5ecfa"></div>
<div style="left:836px;top:477.52px;width:1px;height:20.95px;background:#d5ecfa"></div>
<div style="left:875px;top:477.52px;width:1px;height:20.95px;background:#d5ecfa"></div>
<div style="left:917px;top:477.52px;width:1px;height:20.95px;background:#d5ecfa"></div>
<div style="left:961px;top:477.52px;width:1px;height:20.95px;background:#d5ecfa"></div>
<div style="left:67px;top:481.0173913043478px;width:47px;height:14.100000000000023px;background:#fff;box-sizing:border-box;border:1px solid #2cc3c3;border-top-color:#fff"></div>
<div class="t" style="left:69.6px;top:483.37px;font-size:8px;line-height:10.4px;color:#050505;font-weight:normal;">14</div>
<div class="t" style="left:79.6px;top:483.37px;font-size:8px;line-height:10.4px;color:#050505;font-weight:normal;">:</div>
<div class="t" style="left:83.6px;top:483.37px;font-size:8px;line-height:10.4px;color:#050505;font-weight:normal;">24</div>
<svg style="position:absolute;left:103px;top:484.06739130434784px" width="8" height="8" viewBox="0 0 8 8"><circle cx="4" cy="4" r="2.9" fill="none" stroke="#333" stroke-width="0.85"/><path d="M4 2.3V4.2L5 5" fill="none" stroke="#333" stroke-width="0.7"/></svg>
<div class="t" style="left:121.5px;top:483.26px;font-size:7.33px;line-height:9.53px;color:#050505;font-weight:normal;">CE</div>
<div class="t" style="left:153.7px;top:483.26px;font-size:7.33px;line-height:9.53px;color:#050505;font-weight:normal;">MEDQX</div>
<div class="t" style="left:188.5px;top:483.26px;font-size:7.33px;line-height:9.53px;color:#050505;font-weight:normal;">1057</div>
<div class="t" style="left:239.5px;top:483.26px;font-size:7.33px;line-height:9.53px;color:#050505;font-weight:normal;">DEXAMETASONA FOSFATO 8MG/2ML-2017M-0012145-R1 (VITALIS) (ATC H02AB02) 8.00000 SOLUCIONES</div>
<div class="t" style="left:764.5px;top:483.26px;font-size:7.33px;line-height:9.53px;color:#050505;font-weight:normal;">2</div>
<div class="t" style="left:796.3px;top:483.26px;font-size:7.33px;line-height:9.53px;color:#050505;font-weight:normal;">2</div>
<div class="t" style="left:878.8px;top:483.26px;font-size:7.33px;line-height:9.53px;color:#050505;font-weight:normal;">2</div>
<div style="left:921px;top:480.2173913043478px;width:36px;height:16.0px;background:#fff;box-sizing:border-box;border:1px solid #2cc3c3;border-top-color:#fff"></div>
<div class="t" style="left:923.6px;top:483.54px;font-size:7.33px;line-height:9.53px;color:#050505;font-weight:normal;">2</div>
<div style="left:964px;top:480.31739130434784px;width:228px;height:15.800000000000011px;background:#fff;box-sizing:border-box;border:1px solid #2cc3c3;border-top-color:#fff"></div>
<div class="t" style="left:966.6px;top:483.54px;font-size:7.33px;line-height:9.53px;color:#050505;font-weight:normal;">APLICAR 16 MG IV DIA 1</div>
<div style="left:63px;top:498.17px;width:1139px;height:20.95px;background:#d5ecfa"></div>
<div style="left:118px;top:498.17px;width:1px;height:20.95px;background:#d5ecfa"></div>
<div style="left:150px;top:498.17px;width:1px;height:20.95px;background:#d5ecfa"></div>
<div style="left:185px;top:498.17px;width:1px;height:20.95px;background:#d5ecfa"></div>
<div style="left:236px;top:498.17px;width:1px;height:20.95px;background:#d5ecfa"></div>
<div style="left:761px;top:498.17px;width:1px;height:20.95px;background:#d5ecfa"></div>
<div style="left:792px;top:498.17px;width:1px;height:20.95px;background:#d5ecfa"></div>
<div style="left:836px;top:498.17px;width:1px;height:20.95px;background:#d5ecfa"></div>
<div style="left:875px;top:498.17px;width:1px;height:20.95px;background:#d5ecfa"></div>
<div style="left:917px;top:498.17px;width:1px;height:20.95px;background:#d5ecfa"></div>
<div style="left:961px;top:498.17px;width:1px;height:20.95px;background:#d5ecfa"></div>
<div style="left:67px;top:501.6695652173913px;width:47px;height:14.100000000000023px;background:#fff;box-sizing:border-box;border:1px solid #2cc3c3;border-top-color:#fff"></div>
<div class="t" style="left:69.6px;top:504.03px;font-size:8px;line-height:10.4px;color:#050505;font-weight:normal;">14</div>
<div class="t" style="left:79.6px;top:504.03px;font-size:8px;line-height:10.4px;color:#050505;font-weight:normal;">:</div>
<div class="t" style="left:83.6px;top:504.03px;font-size:8px;line-height:10.4px;color:#050505;font-weight:normal;">24</div>
<svg style="position:absolute;left:103px;top:504.71956521739133px" width="8" height="8" viewBox="0 0 8 8"><circle cx="4" cy="4" r="2.9" fill="none" stroke="#333" stroke-width="0.85"/><path d="M4 2.3V4.2L5 5" fill="none" stroke="#333" stroke-width="0.7"/></svg>
<div class="t" style="left:121.5px;top:503.91px;font-size:7.33px;line-height:9.53px;color:#050505;font-weight:normal;">CE</div>
<div class="t" style="left:153.7px;top:503.91px;font-size:7.33px;line-height:9.53px;color:#050505;font-weight:normal;">MEDQX</div>
<div class="t" style="left:188.5px;top:503.91px;font-size:7.33px;line-height:9.53px;color:#050505;font-weight:normal;">1121</div>
<div class="t" style="left:239.5px;top:503.91px;font-size:7.33px;line-height:9.53px;color:#050505;font-weight:normal;">DEXTROSA 5% (FRASCO) 500ML-INVIMA 2019M-0007579-R1 (PISA) (ATC B05CX01) .05000 SH - SOLUCIONES</div>
<div class="t" style="left:764.5px;top:503.91px;font-size:7.33px;line-height:9.53px;color:#050505;font-weight:normal;">1</div>
<div class="t" style="left:796.3px;top:503.91px;font-size:7.33px;line-height:9.53px;color:#050505;font-weight:normal;">1</div>
<div class="t" style="left:878.8px;top:503.91px;font-size:7.33px;line-height:9.53px;color:#050505;font-weight:normal;">1</div>
<div style="left:921px;top:500.8695652173913px;width:36px;height:16.000000000000057px;background:#fff;box-sizing:border-box;border:1px solid #2cc3c3;border-top-color:#fff"></div>
<div class="t" style="left:923.6px;top:504.19px;font-size:7.33px;line-height:9.53px;color:#050505;font-weight:normal;">1</div>
<div style="left:964px;top:500.96956521739133px;width:228px;height:15.800000000000011px;background:#fff;box-sizing:border-box;border:1px solid #2cc3c3;border-top-color:#fff"></div>
<div style="left:63px;top:518.82px;width:1139px;height:20.95px;background:#b4def7"></div>
<div style="left:118px;top:518.82px;width:1px;height:20.95px;background:#d5ecfa"></div>
<div style="left:150px;top:518.82px;width:1px;height:20.95px;background:#d5ecfa"></div>
<div style="left:185px;top:518.82px;width:1px;height:20.95px;background:#d5ecfa"></div>
<div style="left:236px;top:518.82px;width:1px;height:20.95px;background:#d5ecfa"></div>
<div style="left:761px;top:518.82px;width:1px;height:20.95px;background:#d5ecfa"></div>
<div style="left:792px;top:518.82px;width:1px;height:20.95px;background:#d5ecfa"></div>
<div style="left:836px;top:518.82px;width:1px;height:20.95px;background:#d5ecfa"></div>
<div style="left:875px;top:518.82px;width:1px;height:20.95px;background:#d5ecfa"></div>
<div style="left:917px;top:518.82px;width:1px;height:20.95px;background:#d5ecfa"></div>
<div style="left:961px;top:518.82px;width:1px;height:20.95px;background:#d5ecfa"></div>
<div style="left:67px;top:522.3217391304347px;width:47px;height:14.100000000000023px;background:#fff;box-sizing:border-box;border:1px solid #2cc3c3;border-top-color:#fff"></div>
<div class="t" style="left:69.6px;top:524.68px;font-size:8px;line-height:10.4px;color:#050505;font-weight:normal;">14</div>
<div class="t" style="left:79.6px;top:524.68px;font-size:8px;line-height:10.4px;color:#050505;font-weight:normal;">:</div>
<div class="t" style="left:83.6px;top:524.68px;font-size:8px;line-height:10.4px;color:#050505;font-weight:normal;">24</div>
<svg style="position:absolute;left:103px;top:525.3717391304347px" width="8" height="8" viewBox="0 0 8 8"><circle cx="4" cy="4" r="2.9" fill="none" stroke="#333" stroke-width="0.85"/><path d="M4 2.3V4.2L5 5" fill="none" stroke="#333" stroke-width="0.7"/></svg>
<div class="t" style="left:121.5px;top:524.57px;font-size:7.33px;line-height:9.53px;color:#050505;font-weight:normal;">CE</div>
<div class="t" style="left:153.7px;top:524.57px;font-size:7.33px;line-height:9.53px;color:#050505;font-weight:normal;">MEDQX</div>
<div class="t" style="left:188.5px;top:524.57px;font-size:7.33px;line-height:9.53px;color:#050505;font-weight:normal;">386</div>
<div class="t" style="left:239.5px;top:524.57px;font-size:7.33px;line-height:9.53px;color:#050505;font-weight:normal;">EQUIPO PARA ADMINISTRACION DE SOLUCIONES (BOMBA INFUSION) (ATC UND)</div>
<div class="t" style="left:764.5px;top:524.57px;font-size:7.33px;line-height:9.53px;color:#050505;font-weight:normal;">1</div>
<div class="t" style="left:796.3px;top:524.57px;font-size:7.33px;line-height:9.53px;color:#050505;font-weight:normal;">1</div>
<div class="t" style="left:878.8px;top:524.57px;font-size:7.33px;line-height:9.53px;color:#050505;font-weight:normal;">1</div>
<div style="left:921px;top:521.5217391304348px;width:36px;height:16.0px;background:#fff;box-sizing:border-box;border:1px solid #2cc3c3;border-top-color:#fff"></div>
<div class="t" style="left:923.6px;top:524.84px;font-size:7.33px;line-height:9.53px;color:#050505;font-weight:normal;">1</div>
<div style="left:964px;top:521.6217391304347px;width:228px;height:15.800000000000068px;background:#fff;box-sizing:border-box;border:1px solid #2cc3c3;border-top-color:#fff"></div>
<div style="left:63px;top:539.47px;width:1139px;height:20.95px;background:#d5ecfa"></div>
<div style="left:118px;top:539.47px;width:1px;height:20.95px;background:#d5ecfa"></div>
<div style="left:150px;top:539.47px;width:1px;height:20.95px;background:#d5ecfa"></div>
<div style="left:185px;top:539.47px;width:1px;height:20.95px;background:#d5ecfa"></div>
<div style="left:236px;top:539.47px;width:1px;height:20.95px;background:#d5ecfa"></div>
<div style="left:761px;top:539.47px;width:1px;height:20.95px;background:#d5ecfa"></div>
<div style="left:792px;top:539.47px;width:1px;height:20.95px;background:#d5ecfa"></div>
<div style="left:836px;top:539.47px;width:1px;height:20.95px;background:#d5ecfa"></div>
<div style="left:875px;top:539.47px;width:1px;height:20.95px;background:#d5ecfa"></div>
<div style="left:917px;top:539.47px;width:1px;height:20.95px;background:#d5ecfa"></div>
<div style="left:961px;top:539.47px;width:1px;height:20.95px;background:#d5ecfa"></div>
<div style="left:67px;top:542.9739130434782px;width:47px;height:14.100000000000023px;background:#fff;box-sizing:border-box;border:1px solid #2cc3c3;border-top-color:#fff"></div>
<div class="t" style="left:69.6px;top:545.33px;font-size:8px;line-height:10.4px;color:#050505;font-weight:normal;">14</div>
<div class="t" style="left:79.6px;top:545.33px;font-size:8px;line-height:10.4px;color:#050505;font-weight:normal;">:</div>
<div class="t" style="left:83.6px;top:545.33px;font-size:8px;line-height:10.4px;color:#050505;font-weight:normal;">24</div>
<svg style="position:absolute;left:103px;top:546.0239130434782px" width="8" height="8" viewBox="0 0 8 8"><circle cx="4" cy="4" r="2.9" fill="none" stroke="#333" stroke-width="0.85"/><path d="M4 2.3V4.2L5 5" fill="none" stroke="#333" stroke-width="0.7"/></svg>
<div class="t" style="left:121.5px;top:545.22px;font-size:7.33px;line-height:9.53px;color:#050505;font-weight:normal;">CE</div>
<div class="t" style="left:153.7px;top:545.22px;font-size:7.33px;line-height:9.53px;color:#050505;font-weight:normal;">MEDQX</div>
<div class="t" style="left:188.5px;top:545.22px;font-size:7.33px;line-height:9.53px;color:#050505;font-weight:normal;">1117</div>
<div class="t" style="left:239.5px;top:545.22px;font-size:7.33px;line-height:9.53px;color:#050505;font-weight:normal;">ESPARADRAPO CUREBAND MICROPOROSO - CINTA ADHESIVA HIPOALERGÉNICA-INVIMA 2017DM-0015914 () (ATC )</div>
<div class="t" style="left:764.5px;top:545.22px;font-size:7.33px;line-height:9.53px;color:#050505;font-weight:normal;">1</div>
<div class="t" style="left:796.3px;top:545.22px;font-size:7.33px;line-height:9.53px;color:#050505;font-weight:normal;">1</div>
<div class="t" style="left:878.8px;top:545.22px;font-size:7.33px;line-height:9.53px;color:#050505;font-weight:normal;">1</div>
<div style="left:921px;top:542.1739130434783px;width:36px;height:16.0px;background:#fff;box-sizing:border-box;border:1px solid #2cc3c3;border-top-color:#fff"></div>
<div class="t" style="left:923.6px;top:545.49px;font-size:7.33px;line-height:9.53px;color:#050505;font-weight:normal;">1</div>
<div style="left:964px;top:542.2739130434782px;width:228px;height:15.800000000000068px;background:#fff;box-sizing:border-box;border:1px solid #2cc3c3;border-top-color:#fff"></div>
<div style="left:63px;top:560.13px;width:1139px;height:20.95px;background:#b4def7"></div>
<div style="left:118px;top:560.13px;width:1px;height:20.95px;background:#d5ecfa"></div>
<div style="left:150px;top:560.13px;width:1px;height:20.95px;background:#d5ecfa"></div>
<div style="left:185px;top:560.13px;width:1px;height:20.95px;background:#d5ecfa"></div>
<div style="left:236px;top:560.13px;width:1px;height:20.95px;background:#d5ecfa"></div>
<div style="left:761px;top:560.13px;width:1px;height:20.95px;background:#d5ecfa"></div>
<div style="left:792px;top:560.13px;width:1px;height:20.95px;background:#d5ecfa"></div>
<div style="left:836px;top:560.13px;width:1px;height:20.95px;background:#d5ecfa"></div>
<div style="left:875px;top:560.13px;width:1px;height:20.95px;background:#d5ecfa"></div>
<div style="left:917px;top:560.13px;width:1px;height:20.95px;background:#d5ecfa"></div>
<div style="left:961px;top:560.13px;width:1px;height:20.95px;background:#d5ecfa"></div>
<div style="left:67px;top:563.6260869565217px;width:47px;height:14.100000000000023px;background:#fff;box-sizing:border-box;border:1px solid #2cc3c3;border-top-color:#fff"></div>
<div class="t" style="left:69.6px;top:565.98px;font-size:8px;line-height:10.4px;color:#050505;font-weight:normal;">14</div>
<div class="t" style="left:79.6px;top:565.98px;font-size:8px;line-height:10.4px;color:#050505;font-weight:normal;">:</div>
<div class="t" style="left:83.6px;top:565.98px;font-size:8px;line-height:10.4px;color:#050505;font-weight:normal;">24</div>
<svg style="position:absolute;left:103px;top:566.6760869565217px" width="8" height="8" viewBox="0 0 8 8"><circle cx="4" cy="4" r="2.9" fill="none" stroke="#333" stroke-width="0.85"/><path d="M4 2.3V4.2L5 5" fill="none" stroke="#333" stroke-width="0.7"/></svg>
<div class="t" style="left:121.5px;top:565.87px;font-size:7.33px;line-height:9.53px;color:#050505;font-weight:normal;">CE</div>
<div class="t" style="left:153.7px;top:565.87px;font-size:7.33px;line-height:9.53px;color:#050505;font-weight:normal;">MEDQX</div>
<div class="t" style="left:188.5px;top:565.87px;font-size:7.33px;line-height:9.53px;color:#050505;font-weight:normal;">1070</div>
<div class="t" style="left:239.5px;top:565.87px;font-size:7.33px;line-height:9.53px;color:#050505;font-weight:normal;">ESPONJA DE GASAS ESTERILE INVIMA 2015DM-0003258-R1</div>
<div class="t" style="left:764.5px;top:565.87px;font-size:7.33px;line-height:9.53px;color:#050505;font-weight:normal;">3</div>
<div class="t" style="left:796.3px;top:565.87px;font-size:7.33px;line-height:9.53px;color:#050505;font-weight:normal;">3</div>
<div class="t" style="left:878.8px;top:565.87px;font-size:7.33px;line-height:9.53px;color:#050505;font-weight:normal;">3</div>
<div style="left:921px;top:562.8260869565217px;width:36px;height:16.0px;background:#fff;box-sizing:border-box;border:1px solid #2cc3c3;border-top-color:#fff"></div>
<div class="t" style="left:923.6px;top:566.15px;font-size:7.33px;line-height:9.53px;color:#050505;font-weight:normal;">3</div>
<div style="left:964px;top:562.9260869565217px;width:228px;height:15.800000000000068px;background:#fff;box-sizing:border-box;border:1px solid #2cc3c3;border-top-color:#fff"></div>
<div style="left:63px;top:580.78px;width:1139px;height:20.95px;background:#d5ecfa"></div>
<div style="left:118px;top:580.78px;width:1px;height:20.95px;background:#d5ecfa"></div>
<div style="left:150px;top:580.78px;width:1px;height:20.95px;background:#d5ecfa"></div>
<div style="left:185px;top:580.78px;width:1px;height:20.95px;background:#d5ecfa"></div>
<div style="left:236px;top:580.78px;width:1px;height:20.95px;background:#d5ecfa"></div>
<div style="left:761px;top:580.78px;width:1px;height:20.95px;background:#d5ecfa"></div>
<div style="left:792px;top:580.78px;width:1px;height:20.95px;background:#d5ecfa"></div>
<div style="left:836px;top:580.78px;width:1px;height:20.95px;background:#d5ecfa"></div>
<div style="left:875px;top:580.78px;width:1px;height:20.95px;background:#d5ecfa"></div>
<div style="left:917px;top:580.78px;width:1px;height:20.95px;background:#d5ecfa"></div>
<div style="left:961px;top:580.78px;width:1px;height:20.95px;background:#d5ecfa"></div>
<div style="left:67px;top:584.2782608695652px;width:47px;height:14.100000000000023px;background:#fff;box-sizing:border-box;border:1px solid #2cc3c3;border-top-color:#fff"></div>
<div class="t" style="left:69.6px;top:586.63px;font-size:8px;line-height:10.4px;color:#050505;font-weight:normal;">14</div>
<div class="t" style="left:79.6px;top:586.63px;font-size:8px;line-height:10.4px;color:#050505;font-weight:normal;">:</div>
<div class="t" style="left:83.6px;top:586.63px;font-size:8px;line-height:10.4px;color:#050505;font-weight:normal;">24</div>
<svg style="position:absolute;left:103px;top:587.3282608695652px" width="8" height="8" viewBox="0 0 8 8"><circle cx="4" cy="4" r="2.9" fill="none" stroke="#333" stroke-width="0.85"/><path d="M4 2.3V4.2L5 5" fill="none" stroke="#333" stroke-width="0.7"/></svg>
<div class="t" style="left:121.5px;top:586.52px;font-size:7.33px;line-height:9.53px;color:#050505;font-weight:normal;">CE</div>
<div class="t" style="left:153.7px;top:586.52px;font-size:7.33px;line-height:9.53px;color:#050505;font-weight:normal;">MEDQX</div>
<div class="t" style="left:188.5px;top:586.52px;font-size:7.33px;line-height:9.53px;color:#050505;font-weight:normal;">1071</div>
<div class="t" style="left:239.5px;top:586.52px;font-size:7.33px;line-height:9.53px;color:#050505;font-weight:normal;">FILTRO DE INFUCION 022 MICRAS</div>
<div class="t" style="left:764.5px;top:586.52px;font-size:7.33px;line-height:9.53px;color:#050505;font-weight:normal;">1</div>
<div class="t" style="left:796.3px;top:586.52px;font-size:7.33px;line-height:9.53px;color:#050505;font-weight:normal;">1</div>
<div class="t" style="left:878.8px;top:586.52px;font-size:7.33px;line-height:9.53px;color:#050505;font-weight:normal;">1</div>
<div style="left:921px;top:583.4782608695652px;width:36px;height:16.0px;background:#fff;box-sizing:border-box;border:1px solid #2cc3c3;border-top-color:#fff"></div>
<div class="t" style="left:923.6px;top:586.80px;font-size:7.33px;line-height:9.53px;color:#050505;font-weight:normal;">1</div>
<div style="left:964px;top:583.5782608695652px;width:228px;height:15.800000000000068px;background:#fff;box-sizing:border-box;border:1px solid #2cc3c3;border-top-color:#fff"></div>
<div style="left:63px;top:601.43px;width:1139px;height:20.95px;background:#b4def7"></div>
<div style="left:118px;top:601.43px;width:1px;height:20.95px;background:#d5ecfa"></div>
<div style="left:150px;top:601.43px;width:1px;height:20.95px;background:#d5ecfa"></div>
<div style="left:185px;top:601.43px;width:1px;height:20.95px;background:#d5ecfa"></div>
<div style="left:236px;top:601.43px;width:1px;height:20.95px;background:#d5ecfa"></div>
<div style="left:761px;top:601.43px;width:1px;height:20.95px;background:#d5ecfa"></div>
<div style="left:792px;top:601.43px;width:1px;height:20.95px;background:#d5ecfa"></div>
<div style="left:836px;top:601.43px;width:1px;height:20.95px;background:#d5ecfa"></div>
<div style="left:875px;top:601.43px;width:1px;height:20.95px;background:#d5ecfa"></div>
<div style="left:917px;top:601.43px;width:1px;height:20.95px;background:#d5ecfa"></div>
<div style="left:961px;top:601.43px;width:1px;height:20.95px;background:#d5ecfa"></div>
<div style="left:67px;top:604.9304347826087px;width:47px;height:14.100000000000023px;background:#fff;box-sizing:border-box;border:1px solid #2cc3c3;border-top-color:#fff"></div>
<div class="t" style="left:69.6px;top:607.29px;font-size:8px;line-height:10.4px;color:#050505;font-weight:normal;">14</div>
<div class="t" style="left:79.6px;top:607.29px;font-size:8px;line-height:10.4px;color:#050505;font-weight:normal;">:</div>
<div class="t" style="left:83.6px;top:607.29px;font-size:8px;line-height:10.4px;color:#050505;font-weight:normal;">24</div>
<svg style="position:absolute;left:103px;top:607.9804347826087px" width="8" height="8" viewBox="0 0 8 8"><circle cx="4" cy="4" r="2.9" fill="none" stroke="#333" stroke-width="0.85"/><path d="M4 2.3V4.2L5 5" fill="none" stroke="#333" stroke-width="0.7"/></svg>
<div class="t" style="left:121.5px;top:607.17px;font-size:7.33px;line-height:9.53px;color:#050505;font-weight:normal;">CE</div>
<div class="t" style="left:153.7px;top:607.17px;font-size:7.33px;line-height:9.53px;color:#050505;font-weight:normal;">MEDQX</div>
<div class="t" style="left:188.5px;top:607.17px;font-size:7.33px;line-height:9.53px;color:#050505;font-weight:normal;">1065</div>
<div class="t" style="left:239.5px;top:607.17px;font-size:7.33px;line-height:9.53px;color:#050505;font-weight:normal;">GUANTES LATEX EXAMINATION GLOVES TALLA M -INVIMA 2019DM-0019503</div>
<div class="t" style="left:764.5px;top:607.17px;font-size:7.33px;line-height:9.53px;color:#050505;font-weight:normal;">8</div>
<div class="t" style="left:796.3px;top:607.17px;font-size:7.33px;line-height:9.53px;color:#050505;font-weight:normal;">8</div>
<div class="t" style="left:878.8px;top:607.17px;font-size:7.33px;line-height:9.53px;color:#050505;font-weight:normal;">8</div>
<div style="left:921px;top:604.1304347826087px;width:36px;height:16.0px;background:#fff;box-sizing:border-box;border:1px solid #2cc3c3;border-top-color:#fff"></div>
<div class="t" style="left:923.6px;top:607.45px;font-size:7.33px;line-height:9.53px;color:#050505;font-weight:normal;">8</div>
<div style="left:964px;top:604.2304347826087px;width:228px;height:15.800000000000068px;background:#fff;box-sizing:border-box;border:1px solid #2cc3c3;border-top-color:#fff"></div>
<div style="left:63px;top:622.08px;width:1139px;height:20.95px;background:#d5ecfa"></div>
<div style="left:118px;top:622.08px;width:1px;height:20.95px;background:#d5ecfa"></div>
<div style="left:150px;top:622.08px;width:1px;height:20.95px;background:#d5ecfa"></div>
<div style="left:185px;top:622.08px;width:1px;height:20.95px;background:#d5ecfa"></div>
<div style="left:236px;top:622.08px;width:1px;height:20.95px;background:#d5ecfa"></div>
<div style="left:761px;top:622.08px;width:1px;height:20.95px;background:#d5ecfa"></div>
<div style="left:792px;top:622.08px;width:1px;height:20.95px;background:#d5ecfa"></div>
<div style="left:836px;top:622.08px;width:1px;height:20.95px;background:#d5ecfa"></div>
<div style="left:875px;top:622.08px;width:1px;height:20.95px;background:#d5ecfa"></div>
<div style="left:917px;top:622.08px;width:1px;height:20.95px;background:#d5ecfa"></div>
<div style="left:961px;top:622.08px;width:1px;height:20.95px;background:#d5ecfa"></div>
<div style="left:67px;top:625.5826086956522px;width:47px;height:14.100000000000023px;background:#fff;box-sizing:border-box;border:1px solid #2cc3c3;border-top-color:#fff"></div>
<div class="t" style="left:69.6px;top:627.94px;font-size:8px;line-height:10.4px;color:#050505;font-weight:normal;">14</div>
<div class="t" style="left:79.6px;top:627.94px;font-size:8px;line-height:10.4px;color:#050505;font-weight:normal;">:</div>
<div class="t" style="left:83.6px;top:627.94px;font-size:8px;line-height:10.4px;color:#050505;font-weight:normal;">24</div>
<svg style="position:absolute;left:103px;top:628.6326086956522px" width="8" height="8" viewBox="0 0 8 8"><circle cx="4" cy="4" r="2.9" fill="none" stroke="#333" stroke-width="0.85"/><path d="M4 2.3V4.2L5 5" fill="none" stroke="#333" stroke-width="0.7"/></svg>
<div class="t" style="left:121.5px;top:627.83px;font-size:7.33px;line-height:9.53px;color:#050505;font-weight:normal;">CE</div>
<div class="t" style="left:153.7px;top:627.83px;font-size:7.33px;line-height:9.53px;color:#050505;font-weight:normal;">MEDQX</div>
<div class="t" style="left:188.5px;top:627.83px;font-size:7.33px;line-height:9.53px;color:#050505;font-weight:normal;">537</div>
<div class="t" style="left:239.5px;top:627.83px;font-size:7.33px;line-height:9.53px;color:#050505;font-weight:normal;">GUANTES PARA CIRUGIA ESTERIL N. 7 (ATC )</div>
<div class="t" style="left:764.5px;top:627.83px;font-size:7.33px;line-height:9.53px;color:#050505;font-weight:normal;">3</div>
<div class="t" style="left:796.3px;top:627.83px;font-size:7.33px;line-height:9.53px;color:#050505;font-weight:normal;">3</div>
<div class="t" style="left:878.8px;top:627.83px;font-size:7.33px;line-height:9.53px;color:#050505;font-weight:normal;">3</div>
<div style="left:921px;top:624.7826086956522px;width:36px;height:16.0px;background:#fff;box-sizing:border-box;border:1px solid #2cc3c3;border-top-color:#fff"></div>
<div class="t" style="left:923.6px;top:628.10px;font-size:7.33px;line-height:9.53px;color:#050505;font-weight:normal;">3</div>
<div style="left:964px;top:624.8826086956522px;width:228px;height:15.800000000000068px;background:#fff;box-sizing:border-box;border:1px solid #2cc3c3;border-top-color:#fff"></div>
<div style="left:63px;top:642.73px;width:1139px;height:20.95px;background:#b4def7"></div>
<div style="left:118px;top:642.73px;width:1px;height:20.95px;background:#d5ecfa"></div>
<div style="left:150px;top:642.73px;width:1px;height:20.95px;background:#d5ecfa"></div>
<div style="left:185px;top:642.73px;width:1px;height:20.95px;background:#d5ecfa"></div>
<div style="left:236px;top:642.73px;width:1px;height:20.95px;background:#d5ecfa"></div>
<div style="left:761px;top:642.73px;width:1px;height:20.95px;background:#d5ecfa"></div>
<div style="left:792px;top:642.73px;width:1px;height:20.95px;background:#d5ecfa"></div>
<div style="left:836px;top:642.73px;width:1px;height:20.95px;background:#d5ecfa"></div>
<div style="left:875px;top:642.73px;width:1px;height:20.95px;background:#d5ecfa"></div>
<div style="left:917px;top:642.73px;width:1px;height:20.95px;background:#d5ecfa"></div>
<div style="left:961px;top:642.73px;width:1px;height:20.95px;background:#d5ecfa"></div>
<div style="left:67px;top:646.2347826086957px;width:47px;height:14.100000000000023px;background:#fff;box-sizing:border-box;border:1px solid #2cc3c3;border-top-color:#fff"></div>
<div class="t" style="left:69.6px;top:648.59px;font-size:8px;line-height:10.4px;color:#050505;font-weight:normal;">14</div>
<div class="t" style="left:79.6px;top:648.59px;font-size:8px;line-height:10.4px;color:#050505;font-weight:normal;">:</div>
<div class="t" style="left:83.6px;top:648.59px;font-size:8px;line-height:10.4px;color:#050505;font-weight:normal;">24</div>
<svg style="position:absolute;left:103px;top:649.2847826086957px" width="8" height="8" viewBox="0 0 8 8"><circle cx="4" cy="4" r="2.9" fill="none" stroke="#333" stroke-width="0.85"/><path d="M4 2.3V4.2L5 5" fill="none" stroke="#333" stroke-width="0.7"/></svg>
<div class="t" style="left:121.5px;top:648.48px;font-size:7.33px;line-height:9.53px;color:#050505;font-weight:normal;">CE</div>
<div class="t" style="left:153.7px;top:648.48px;font-size:7.33px;line-height:9.53px;color:#050505;font-weight:normal;">MEDQX</div>
<div class="t" style="left:188.5px;top:648.48px;font-size:7.33px;line-height:9.53px;color:#050505;font-weight:normal;">564</div>
<div class="t" style="left:239.5px;top:648.48px;font-size:7.33px;line-height:9.53px;color:#050505;font-weight:normal;">I.V. CATETER INTRAVENOSO NO 24 (ATC UND) UNIDAD</div>
<div class="t" style="left:764.5px;top:648.48px;font-size:7.33px;line-height:9.53px;color:#050505;font-weight:normal;">2</div>
<div class="t" style="left:796.3px;top:648.48px;font-size:7.33px;line-height:9.53px;color:#050505;font-weight:normal;">2</div>
<div class="t" style="left:878.8px;top:648.48px;font-size:7.33px;line-height:9.53px;color:#050505;font-weight:normal;">2</div>
<div style="left:921px;top:645.4347826086957px;width:36px;height:16.0px;background:#fff;box-sizing:border-box;border:1px solid #2cc3c3;border-top-color:#fff"></div>
<div class="t" style="left:923.6px;top:648.75px;font-size:7.33px;line-height:9.53px;color:#050505;font-weight:normal;">2</div>
<div style="left:964px;top:645.5347826086957px;width:228px;height:15.800000000000068px;background:#fff;box-sizing:border-box;border:1px solid #2cc3c3;border-top-color:#fff"></div>
<div style="left:63px;top:663.39px;width:1139px;height:20.95px;background:#d5ecfa"></div>
<div style="left:118px;top:663.39px;width:1px;height:20.95px;background:#d5ecfa"></div>
<div style="left:150px;top:663.39px;width:1px;height:20.95px;background:#d5ecfa"></div>
<div style="left:185px;top:663.39px;width:1px;height:20.95px;background:#d5ecfa"></div>
<div style="left:236px;top:663.39px;width:1px;height:20.95px;background:#d5ecfa"></div>
<div style="left:761px;top:663.39px;width:1px;height:20.95px;background:#d5ecfa"></div>
<div style="left:792px;top:663.39px;width:1px;height:20.95px;background:#d5ecfa"></div>
<div style="left:836px;top:663.39px;width:1px;height:20.95px;background:#d5ecfa"></div>
<div style="left:875px;top:663.39px;width:1px;height:20.95px;background:#d5ecfa"></div>
<div style="left:917px;top:663.39px;width:1px;height:20.95px;background:#d5ecfa"></div>
<div style="left:961px;top:663.39px;width:1px;height:20.95px;background:#d5ecfa"></div>
<div style="left:67px;top:666.8869565217392px;width:47px;height:14.100000000000023px;background:#fff;box-sizing:border-box;border:1px solid #2cc3c3;border-top-color:#fff"></div>
<div class="t" style="left:69.6px;top:669.24px;font-size:8px;line-height:10.4px;color:#050505;font-weight:normal;">14</div>
<div class="t" style="left:79.6px;top:669.24px;font-size:8px;line-height:10.4px;color:#050505;font-weight:normal;">:</div>
<div class="t" style="left:83.6px;top:669.24px;font-size:8px;line-height:10.4px;color:#050505;font-weight:normal;">24</div>
<svg style="position:absolute;left:103px;top:669.9369565217391px" width="8" height="8" viewBox="0 0 8 8"><circle cx="4" cy="4" r="2.9" fill="none" stroke="#333" stroke-width="0.85"/><path d="M4 2.3V4.2L5 5" fill="none" stroke="#333" stroke-width="0.7"/></svg>
<div class="t" style="left:121.5px;top:669.13px;font-size:7.33px;line-height:9.53px;color:#050505;font-weight:normal;">CE</div>
<div class="t" style="left:153.7px;top:669.13px;font-size:7.33px;line-height:9.53px;color:#050505;font-weight:normal;">MEDQX</div>
<div class="t" style="left:188.5px;top:669.13px;font-size:7.33px;line-height:9.53px;color:#050505;font-weight:normal;">1079</div>
<div class="t" style="left:239.5px;top:669.13px;font-size:7.33px;line-height:9.53px;color:#050505;font-weight:normal;">JERINGA 20 ML 2018DM-0001797-R1 SAFE</div>
<div class="t" style="left:764.5px;top:669.13px;font-size:7.33px;line-height:9.53px;color:#050505;font-weight:normal;">1</div>
<div class="t" style="left:796.3px;top:669.13px;font-size:7.33px;line-height:9.53px;color:#050505;font-weight:normal;">1</div>
<div class="t" style="left:878.8px;top:669.13px;font-size:7.33px;line-height:9.53px;color:#050505;font-weight:normal;">1</div>
<div style="left:921px;top:666.0869565217392px;width:36px;height:16.0px;background:#fff;box-sizing:border-box;border:1px solid #2cc3c3;border-top-color:#fff"></div>
<div class="t" style="left:923.6px;top:669.41px;font-size:7.33px;line-height:9.53px;color:#050505;font-weight:normal;">1</div>
<div style="left:964px;top:666.1869565217391px;width:228px;height:15.800000000000068px;background:#fff;box-sizing:border-box;border:1px solid #2cc3c3;border-top-color:#fff"></div>
<div style="left:63px;top:684.04px;width:1139px;height:20.95px;background:#b4def7"></div>
<div style="left:118px;top:684.04px;width:1px;height:20.95px;background:#d5ecfa"></div>
<div style="left:150px;top:684.04px;width:1px;height:20.95px;background:#d5ecfa"></div>
<div style="left:185px;top:684.04px;width:1px;height:20.95px;background:#d5ecfa"></div>
<div style="left:236px;top:684.04px;width:1px;height:20.95px;background:#d5ecfa"></div>
<div style="left:761px;top:684.04px;width:1px;height:20.95px;background:#d5ecfa"></div>
<div style="left:792px;top:684.04px;width:1px;height:20.95px;background:#d5ecfa"></div>
<div style="left:836px;top:684.04px;width:1px;height:20.95px;background:#d5ecfa"></div>
<div style="left:875px;top:684.04px;width:1px;height:20.95px;background:#d5ecfa"></div>
<div style="left:917px;top:684.04px;width:1px;height:20.95px;background:#d5ecfa"></div>
<div style="left:961px;top:684.04px;width:1px;height:20.95px;background:#d5ecfa"></div>
<div style="left:67px;top:687.5391304347826px;width:47px;height:14.100000000000023px;background:#fff;box-sizing:border-box;border:1px solid #2cc3c3;border-top-color:#fff"></div>
<div class="t" style="left:69.6px;top:689.90px;font-size:8px;line-height:10.4px;color:#050505;font-weight:normal;">14</div>
<div class="t" style="left:79.6px;top:689.90px;font-size:8px;line-height:10.4px;color:#050505;font-weight:normal;">:</div>
<div class="t" style="left:83.6px;top:689.90px;font-size:8px;line-height:10.4px;color:#050505;font-weight:normal;">24</div>
<svg style="position:absolute;left:103px;top:690.5891304347826px" width="8" height="8" viewBox="0 0 8 8"><circle cx="4" cy="4" r="2.9" fill="none" stroke="#333" stroke-width="0.85"/><path d="M4 2.3V4.2L5 5" fill="none" stroke="#333" stroke-width="0.7"/></svg>
<div class="t" style="left:121.5px;top:689.78px;font-size:7.33px;line-height:9.53px;color:#050505;font-weight:normal;">CE</div>
<div class="t" style="left:153.7px;top:689.78px;font-size:7.33px;line-height:9.53px;color:#050505;font-weight:normal;">MEDQX</div>
<div class="t" style="left:188.5px;top:689.78px;font-size:7.33px;line-height:9.53px;color:#050505;font-weight:normal;">1101</div>
<div class="t" style="left:239.5px;top:689.78px;font-size:7.33px;line-height:9.53px;color:#050505;font-weight:normal;">KIT DE ROPA DESECHABLE ()</div>
<div class="t" style="left:764.5px;top:689.78px;font-size:7.33px;line-height:9.53px;color:#050505;font-weight:normal;">1</div>
<div class="t" style="left:796.3px;top:689.78px;font-size:7.33px;line-height:9.53px;color:#050505;font-weight:normal;">1</div>
<div class="t" style="left:878.8px;top:689.78px;font-size:7.33px;line-height:9.53px;color:#050505;font-weight:normal;">1</div>
<div style="left:921px;top:686.7391304347826px;width:36px;height:16.0px;background:#fff;box-sizing:border-box;border:1px solid #2cc3c3;border-top-color:#fff"></div>
<div class="t" style="left:923.6px;top:690.06px;font-size:7.33px;line-height:9.53px;color:#050505;font-weight:normal;">01</div>
<div style="left:964px;top:686.8391304347825px;width:228px;height:15.800000000000068px;background:#fff;box-sizing:border-box;border:1px solid #2cc3c3;border-top-color:#fff"></div>
<div style="left:63px;top:704.69px;width:1139px;height:20.95px;background:#d5ecfa"></div>
<div style="left:118px;top:704.69px;width:1px;height:20.95px;background:#d5ecfa"></div>
<div style="left:150px;top:704.69px;width:1px;height:20.95px;background:#d5ecfa"></div>
<div style="left:185px;top:704.69px;width:1px;height:20.95px;background:#d5ecfa"></div>
<div style="left:236px;top:704.69px;width:1px;height:20.95px;background:#d5ecfa"></div>
<div style="left:761px;top:704.69px;width:1px;height:20.95px;background:#d5ecfa"></div>
<div style="left:792px;top:704.69px;width:1px;height:20.95px;background:#d5ecfa"></div>
<div style="left:836px;top:704.69px;width:1px;height:20.95px;background:#d5ecfa"></div>
<div style="left:875px;top:704.69px;width:1px;height:20.95px;background:#d5ecfa"></div>
<div style="left:917px;top:704.69px;width:1px;height:20.95px;background:#d5ecfa"></div>
<div style="left:961px;top:704.69px;width:1px;height:20.95px;background:#d5ecfa"></div>
<div style="left:67px;top:708.1913043478261px;width:47px;height:14.100000000000023px;background:#fff;box-sizing:border-box;border:1px solid #2cc3c3;border-top-color:#fff"></div>
<div class="t" style="left:69.6px;top:710.55px;font-size:8px;line-height:10.4px;color:#050505;font-weight:normal;">14</div>
<div class="t" style="left:79.6px;top:710.55px;font-size:8px;line-height:10.4px;color:#050505;font-weight:normal;">:</div>
<div class="t" style="left:83.6px;top:710.55px;font-size:8px;line-height:10.4px;color:#050505;font-weight:normal;">24</div>
<svg style="position:absolute;left:103px;top:711.2413043478261px" width="8" height="8" viewBox="0 0 8 8"><circle cx="4" cy="4" r="2.9" fill="none" stroke="#333" stroke-width="0.85"/><path d="M4 2.3V4.2L5 5" fill="none" stroke="#333" stroke-width="0.7"/></svg>
<div class="t" style="left:121.5px;top:710.43px;font-size:7.33px;line-height:9.53px;color:#050505;font-weight:normal;">CE</div>
<div class="t" style="left:153.7px;top:710.43px;font-size:7.33px;line-height:9.53px;color:#050505;font-weight:normal;">MEDQX</div>
<div class="t" style="left:188.5px;top:710.43px;font-size:7.33px;line-height:9.53px;color:#050505;font-weight:normal;">1066</div>
<div class="t" style="left:239.5px;top:710.43px;font-size:7.33px;line-height:9.53px;color:#050505;font-weight:normal;">MASCARILLAS DESECHABLES TERMOSELLADAS (TAPABOCAS) INVIMA 2020DM-0022377</div>
<div class="t" style="left:764.5px;top:710.43px;font-size:7.33px;line-height:9.53px;color:#050505;font-weight:normal;">5</div>
<div class="t" style="left:796.3px;top:710.43px;font-size:7.33px;line-height:9.53px;color:#050505;font-weight:normal;">5</div>
<div class="t" style="left:878.8px;top:710.43px;font-size:7.33px;line-height:9.53px;color:#050505;font-weight:normal;">5</div>
<div style="left:921px;top:707.3913043478261px;width:36px;height:16.0px;background:#fff;box-sizing:border-box;border:1px solid #2cc3c3;border-top-color:#fff"></div>
<div class="t" style="left:923.6px;top:710.71px;font-size:7.33px;line-height:9.53px;color:#050505;font-weight:normal;">5</div>
<div style="left:964px;top:707.491304347826px;width:228px;height:15.800000000000068px;background:#fff;box-sizing:border-box;border:1px solid #2cc3c3;border-top-color:#fff"></div>
<div style="left:63px;top:725.34px;width:1139px;height:20.95px;background:#b4def7"></div>
<div style="left:118px;top:725.34px;width:1px;height:20.95px;background:#d5ecfa"></div>
<div style="left:150px;top:725.34px;width:1px;height:20.95px;background:#d5ecfa"></div>
<div style="left:185px;top:725.34px;width:1px;height:20.95px;background:#d5ecfa"></div>
<div style="left:236px;top:725.34px;width:1px;height:20.95px;background:#d5ecfa"></div>
<div style="left:761px;top:725.34px;width:1px;height:20.95px;background:#d5ecfa"></div>
<div style="left:792px;top:725.34px;width:1px;height:20.95px;background:#d5ecfa"></div>
<div style="left:836px;top:725.34px;width:1px;height:20.95px;background:#d5ecfa"></div>
<div style="left:875px;top:725.34px;width:1px;height:20.95px;background:#d5ecfa"></div>
<div style="left:917px;top:725.34px;width:1px;height:20.95px;background:#d5ecfa"></div>
<div style="left:961px;top:725.34px;width:1px;height:20.95px;background:#d5ecfa"></div>
<div style="left:67px;top:728.8434782608695px;width:47px;height:14.100000000000023px;background:#fff;box-sizing:border-box;border:1px solid #2cc3c3;border-top-color:#fff"></div>
<div class="t" style="left:69.6px;top:731.20px;font-size:8px;line-height:10.4px;color:#050505;font-weight:normal;">14</div>
<div class="t" style="left:79.6px;top:731.20px;font-size:8px;line-height:10.4px;color:#050505;font-weight:normal;">:</div>
<div class="t" style="left:83.6px;top:731.20px;font-size:8px;line-height:10.4px;color:#050505;font-weight:normal;">24</div>
<svg style="position:absolute;left:103px;top:731.8934782608694px" width="8" height="8" viewBox="0 0 8 8"><circle cx="4" cy="4" r="2.9" fill="none" stroke="#333" stroke-width="0.85"/><path d="M4 2.3V4.2L5 5" fill="none" stroke="#333" stroke-width="0.7"/></svg>
<div class="t" style="left:121.5px;top:731.09px;font-size:7.33px;line-height:9.53px;color:#050505;font-weight:normal;">CE</div>
<div class="t" style="left:153.7px;top:731.09px;font-size:7.33px;line-height:9.53px;color:#050505;font-weight:normal;">MEDQX</div>
<div class="t" style="left:188.5px;top:731.09px;font-size:7.33px;line-height:9.53px;color:#050505;font-weight:normal;">803</div>
<div class="t" style="left:239.5px;top:731.09px;font-size:7.33px;line-height:9.53px;color:#050505;font-weight:normal;">ONDANSETRON 8MG UNIDAD (ATC U) CAJA POR 10 AMPOLLAS DE VIDRIO TIPO I POR 4 ML C/U SH - SOLUCIONES</div>
<div class="t" style="left:764.5px;top:731.09px;font-size:7.33px;line-height:9.53px;color:#050505;font-weight:normal;">3</div>
<div class="t" style="left:796.3px;top:731.09px;font-size:7.33px;line-height:9.53px;color:#050505;font-weight:normal;">3</div>
<div class="t" style="left:878.8px;top:731.09px;font-size:7.33px;line-height:9.53px;color:#050505;font-weight:normal;">3</div>
<div style="left:921px;top:728.0434782608695px;width:36px;height:16.0px;background:#fff;box-sizing:border-box;border:1px solid #2cc3c3;border-top-color:#fff"></div>
<div class="t" style="left:923.6px;top:731.36px;font-size:7.33px;line-height:9.53px;color:#050505;font-weight:normal;">3</div>
<div style="left:964px;top:728.1434782608694px;width:228px;height:15.800000000000068px;background:#e8f0fe;box-sizing:border-box;border:1px solid #2cc3c3;border-top-color:#e8f0fe"></div>
<div class="t" style="left:966.6px;top:731.36px;font-size:7.33px;line-height:9.53px;color:#050505;font-weight:normal;">APLICAR 24 MG IV DIA 1</div>
<div style="left:63px;top:746.00px;width:1139px;height:20.95px;background:#d5ecfa"></div>
<div style="left:118px;top:746.00px;width:1px;height:20.95px;background:#d5ecfa"></div>
<div style="left:150px;top:746.00px;width:1px;height:20.95px;background:#d5ecfa"></div>
<div style="left:185px;top:746.00px;width:1px;height:20.95px;background:#d5ecfa"></div>
<div style="left:236px;top:746.00px;width:1px;height:20.95px;background:#d5ecfa"></div>
<div style="left:761px;top:746.00px;width:1px;height:20.95px;background:#d5ecfa"></div>
<div style="left:792px;top:746.00px;width:1px;height:20.95px;background:#d5ecfa"></div>
<div style="left:836px;top:746.00px;width:1px;height:20.95px;background:#d5ecfa"></div>
<div style="left:875px;top:746.00px;width:1px;height:20.95px;background:#d5ecfa"></div>
<div style="left:917px;top:746.00px;width:1px;height:20.95px;background:#d5ecfa"></div>
<div style="left:961px;top:746.00px;width:1px;height:20.95px;background:#d5ecfa"></div>
<div style="left:67px;top:749.495652173913px;width:47px;height:14.100000000000023px;background:#fff;box-sizing:border-box;border:1px solid #2cc3c3;border-top-color:#fff"></div>
<div class="t" style="left:69.6px;top:751.85px;font-size:8px;line-height:10.4px;color:#050505;font-weight:normal;">14</div>
<div class="t" style="left:79.6px;top:751.85px;font-size:8px;line-height:10.4px;color:#050505;font-weight:normal;">:</div>
<div class="t" style="left:83.6px;top:751.85px;font-size:8px;line-height:10.4px;color:#050505;font-weight:normal;">24</div>
<svg style="position:absolute;left:103px;top:752.5456521739129px" width="8" height="8" viewBox="0 0 8 8"><circle cx="4" cy="4" r="2.9" fill="none" stroke="#333" stroke-width="0.85"/><path d="M4 2.3V4.2L5 5" fill="none" stroke="#333" stroke-width="0.7"/></svg>
<div class="t" style="left:121.5px;top:751.74px;font-size:7.33px;line-height:9.53px;color:#050505;font-weight:normal;">CE</div>
<div class="t" style="left:153.7px;top:751.74px;font-size:7.33px;line-height:9.53px;color:#050505;font-weight:normal;">MEDQX</div>
<div class="t" style="left:188.5px;top:751.74px;font-size:7.33px;line-height:9.53px;color:#050505;font-weight:normal;">851</div>
<div class="t" style="left:239.5px;top:751.74px;font-size:7.33px;line-height:9.53px;color:#050505;font-weight:normal;">PACLITAXEL 100 MG /16.7 ML (ATC U) 100 mg SOLUCION</div>
<div class="t" style="left:764.5px;top:751.74px;font-size:7.33px;line-height:9.53px;color:#050505;font-weight:normal;">2</div>
<div class="t" style="left:796.3px;top:751.74px;font-size:7.33px;line-height:9.53px;color:#050505;font-weight:normal;">2</div>
<div class="t" style="left:878.8px;top:751.74px;font-size:7.33px;line-height:9.53px;color:#050505;font-weight:normal;">2</div>
<div style="left:921px;top:748.695652173913px;width:36px;height:16.0px;background:#fff;box-sizing:border-box;border:1px solid #2cc3c3;border-top-color:#fff"></div>
<div class="t" style="left:923.6px;top:752.01px;font-size:7.33px;line-height:9.53px;color:#050505;font-weight:normal;">2</div>
<div style="left:964px;top:748.7956521739129px;width:228px;height:15.800000000000068px;background:#e8f0fe;box-sizing:border-box;border:1px solid #2cc3c3;border-top-color:#e8f0fe"></div>
<div class="t" style="left:966.6px;top:752.01px;font-size:7.33px;line-height:9.53px;color:#050505;font-weight:normal;">APLICAR 110 MG IV DIA 15</div>
<div style="left:63px;top:766.65px;width:1139px;height:20.95px;background:#b4def7"></div>
<div style="left:118px;top:766.65px;width:1px;height:20.95px;background:#d5ecfa"></div>
<div style="left:150px;top:766.65px;width:1px;height:20.95px;background:#d5ecfa"></div>
<div style="left:185px;top:766.65px;width:1px;height:20.95px;background:#d5ecfa"></div>
<div style="left:236px;top:766.65px;width:1px;height:20.95px;background:#d5ecfa"></div>
<div style="left:761px;top:766.65px;width:1px;height:20.95px;background:#d5ecfa"></div>
<div style="left:792px;top:766.65px;width:1px;height:20.95px;background:#d5ecfa"></div>
<div style="left:836px;top:766.65px;width:1px;height:20.95px;background:#d5ecfa"></div>
<div style="left:875px;top:766.65px;width:1px;height:20.95px;background:#d5ecfa"></div>
<div style="left:917px;top:766.65px;width:1px;height:20.95px;background:#d5ecfa"></div>
<div style="left:961px;top:766.65px;width:1px;height:20.95px;background:#d5ecfa"></div>
<div style="left:67px;top:770.1478260869565px;width:47px;height:14.100000000000023px;background:#fff;box-sizing:border-box;border:1px solid #2cc3c3;border-top-color:#fff"></div>
<div class="t" style="left:69.6px;top:772.50px;font-size:8px;line-height:10.4px;color:#050505;font-weight:normal;">14</div>
<div class="t" style="left:79.6px;top:772.50px;font-size:8px;line-height:10.4px;color:#050505;font-weight:normal;">:</div>
<div class="t" style="left:83.6px;top:772.50px;font-size:8px;line-height:10.4px;color:#050505;font-weight:normal;">24</div>
<svg style="position:absolute;left:103px;top:773.1978260869564px" width="8" height="8" viewBox="0 0 8 8"><circle cx="4" cy="4" r="2.9" fill="none" stroke="#333" stroke-width="0.85"/><path d="M4 2.3V4.2L5 5" fill="none" stroke="#333" stroke-width="0.7"/></svg>
<div class="t" style="left:121.5px;top:772.39px;font-size:7.33px;line-height:9.53px;color:#050505;font-weight:normal;">CE</div>
<div class="t" style="left:153.7px;top:772.39px;font-size:7.33px;line-height:9.53px;color:#050505;font-weight:normal;">MEDQX</div>
<div class="t" style="left:188.5px;top:772.39px;font-size:7.33px;line-height:9.53px;color:#050505;font-weight:normal;">1120</div>
<div class="t" style="left:239.5px;top:772.39px;font-size:7.33px;line-height:9.53px;color:#050505;font-weight:normal;">SOLUCION SALINA (FRASCO) 0.9% 500ML-INVIMA 2018M-0007404-R1 (PISA) (ATC B05XA03) .90000 SH - SOLUCIONES</div>
<div class="t" style="left:764.5px;top:772.39px;font-size:7.33px;line-height:9.53px;color:#050505;font-weight:normal;">1</div>
<div class="t" style="left:796.3px;top:772.39px;font-size:7.33px;line-height:9.53px;color:#050505;font-weight:normal;">1</div>
<div class="t" style="left:878.8px;top:772.39px;font-size:7.33px;line-height:9.53px;color:#050505;font-weight:normal;">1</div>
<div style="left:921px;top:769.3478260869565px;width:36px;height:16.0px;background:#fff;box-sizing:border-box;border:1px solid #2cc3c3;border-top-color:#fff"></div>
<div class="t" style="left:923.6px;top:772.67px;font-size:7.33px;line-height:9.53px;color:#050505;font-weight:normal;">1</div>
<div style="left:964px;top:769.4478260869564px;width:228px;height:15.800000000000068px;background:#fff;box-sizing:border-box;border:1px solid #2cc3c3;border-top-color:#fff"></div>
<div style="left:63px;top:312px;width:1139px;height:1px;background:#e8fbf3;"></div>
<div style="left:63px;top:787px;width:897px;height:19px;background:#fafaf8;"></div>
<div style="left:63px;top:787px;width:1px;height:19px;background:#d5ecfa;"></div>
<div style="left:67px;top:790px;width:157px;height:14px;background:#04659a;box-sizing:border-box;border-bottom:1px solid #2cc3c3"></div>
<div class="t" style="left:70.4px;top:792.14px;font-size:7.33px;line-height:9.53px;color:#eaf4fa;font-weight:normal;"><span class="sq" style="margin-right:1.8px"></span>Grabar Aplicación Medicamentos e Insumos</div>
<div style="left:63px;top:816px;width:1138px;height:40px;background:#f4f4f0;border-radius:6px 10px 12px 6px"></div>
<div style="left:1033px;top:816px;width:168px;height:18px;background:#fafaf8;border-radius:0 10px 0 0"></div>
<div style="left:64px;top:816px;width:969px;height:18px;background:#f2f2f2;box-sizing:border-box;border:1px solid #c9c9c9;border-radius:3px"></div>
<div class="t" style="left:68px;top:821.24px;font-size:7.33px;line-height:9.53px;color:#2a2294;font-weight:bold;">Aplicacion de Medicamentos e Insumos registrados</div>
<div style="left:1037px;top:818.6px;width:63px;height:13.0px;background:#f1f1f1;box-sizing:border-box;border-right:1.5px solid #1c1c78;border-bottom:1.5px solid #1c1c78;border-left:1px solid #f8f8f8"></div>
<div class="t" style="left:1040.2px;top:820.12px;font-size:7.33px;line-height:9.53px;color:#4a3d96;font-weight:normal;"><span class="sq"></span>Cerrar Ventana</div>
<div style="left:63px;top:834.5px;width:970px;height:21.0px;background:#fafaf8;"></div>
<div style="left:64px;top:835px;width:66px;height:20px;background:#bde5fa;border-radius:3px"></div>
<div class="t" style="left:67px;top:841.22px;font-size:7.33px;line-height:9.53px;color:#050505;font-weight:normal;">Nueva Fecha:</div>
<div style="left:133px;top:838.2px;width:90px;height:13.799999999999955px;background:#fff;box-sizing:border-box;border:1px solid #2cc3c3;border-top-color:#fff"></div>
<div class="t" style="left:135.5px;top:839.69px;font-size:8.6px;line-height:11.18px;color:#050505;font-weight:normal;letter-spacing:-0.4px">29</div>
<div class="t" style="left:150.2px;top:839.69px;font-size:8.6px;line-height:11.18px;color:#050505;font-weight:normal;letter-spacing:-0.4px">03</div>
<div class="t" style="left:164.6px;top:839.69px;font-size:8.6px;line-height:11.18px;color:#050505;font-weight:normal;letter-spacing:-0.4px">2022</div>
<svg style="position:absolute;left:145.20px;top:841.80px" width="4" height="7" viewBox="0 0 4 7"><path d="M0.5 6.8L3.4 0.2" stroke="#222" stroke-width="0.85"/></svg>
<svg style="position:absolute;left:159.90px;top:841.80px" width="4" height="7" viewBox="0 0 4 7"><path d="M0.5 6.8L3.4 0.2" stroke="#222" stroke-width="0.85"/></svg>
<svg style="position:absolute;left:211.4px;top:841.1px" width="8" height="8" viewBox="0 0 8 8"><rect x="0.9" y="1.4" width="6.2" height="6" fill="none" stroke="#222" stroke-width="0.9"/><rect x="0.9" y="1.2" width="6.2" height="1.9" fill="#222"/><rect x="1.8" y="0.2" width="0.9" height="1.4" fill="#222"/><rect x="5.3" y="0.2" width="0.9" height="1.4" fill="#222"/></svg>
<div style="left:362px;top:835px;width:110px;height:20px;background:#bde5fa;border-radius:3px"></div>
<div class="t" style="left:365px;top:841.22px;font-size:7.33px;line-height:9.53px;color:#050505;font-weight:normal;">Nueva hora:</div>
<div style="left:475px;top:838.4px;width:46.5px;height:13.200000000000045px;background:#fff;box-sizing:border-box;border:1px solid #2cc3c3;border-top-color:#fff"></div>
<div class="t" style="left:477.6px;top:840.31px;font-size:8px;line-height:10.4px;color:#050505;font-weight:normal;">14</div>
<div class="t" style="left:487.6px;top:840.31px;font-size:8px;line-height:10.4px;color:#050505;font-weight:normal;">:</div>
<div class="t" style="left:491.6px;top:840.31px;font-size:8px;line-height:10.4px;color:#050505;font-weight:normal;">24</div>
<svg style="position:absolute;left:510.5px;top:841.0px" width="8" height="8" viewBox="0 0 8 8"><circle cx="4" cy="4" r="2.9" fill="none" stroke="#333" stroke-width="0.85"/><path d="M4 2.3V4.2L5 5" fill="none" stroke="#333" stroke-width="0.7"/></svg>
<div style="left:597px;top:835px;width:436px;height:20px;background:#bde5fa;border-radius:3px"></div>
<div style="left:600px;top:838px;width:173px;height:15px;background:#f1f1f1;box-sizing:border-box;border-right:1.5px solid #1c1c78;border-bottom:1.5px solid #1c1c78;border-left:1px solid #f8f8f8"></div>
<div class="t" style="left:603.2px;top:840.52px;font-size:7.33px;line-height:9.53px;color:#4a3d96;font-weight:normal;"><span class="sq" style="margin-right:4px"></span>Actualizar Fecha/Hora de Registro seleccionado</div>
<div style="left:63px;top:869px;width:1138px;height:3px;background:#e4fcee;"></div>
<div style="left:63px;top:872px;width:1138px;height:24px;background:#92d0f5;"></div>
<div style="left:114px;top:872px;width:1px;height:24px;background:#eefaf6;"></div>
<div style="left:612px;top:872px;width:1px;height:24px;background:#eefaf6;"></div>
<div style="left:649px;top:872px;width:1px;height:24px;background:#eefaf6;"></div>
<div style="left:680px;top:872px;width:1px;height:24px;background:#eefaf6;"></div>
<div style="left:723px;top:872px;width:1px;height:24px;background:#eefaf6;"></div>
<div style="left:766px;top:872px;width:1px;height:24px;background:#eefaf6;"></div>
<div style="left:858px;top:872px;width:1px;height:24px;background:#eefaf6;"></div>
<div style="left:914px;top:872px;width:1px;height:24px;background:#eefaf6;"></div>
<div style="left:1085px;top:872px;width:1px;height:24px;background:#eefaf6;"></div>
<div style="left:1122px;top:872px;width:1px;height:24px;background:#eefaf6;"></div>
<div style="left:1157px;top:872px;width:1px;height:24px;background:#eefaf6;"></div>
<div style="left:63px;top:896px;width:1139px;height:1px;background:#eefaf6;"></div>
<div class="t" style="left:63px;width:51px;text-align:center;top:881.14px;font-size:7.33px;line-height:9.53px;color:#222;font-weight:bold">Suministro</div>
<div class="t" style="left:115px;width:497px;text-align:center;top:881.14px;font-size:7.33px;line-height:9.53px;color:#222;font-weight:bold">Nombre</div>
<div class="t" style="left:613px;width:36px;text-align:center;top:878.2px;font-size:7.33px;line-height:8.7px;color:#222;font-weight:bold">Pedida<br>en</div>
<div class="t" style="left:650px;width:30px;text-align:center;top:881.14px;font-size:7.33px;line-height:9.53px;color:#222;font-weight:bold">Pedidas</div>
<div class="t" style="left:681px;width:42px;text-align:center;top:881.14px;font-size:7.33px;line-height:9.53px;color:#222;font-weight:bold">Entregadas</div>
<div class="t" style="left:724px;width:42px;text-align:center;top:878.2px;font-size:7.33px;line-height:8.7px;color:#222;font-weight:bold">Aplicada<br>en</div>
<div class="t" style="left:767px;width:91px;text-align:center;top:881.14px;font-size:7.33px;line-height:9.53px;color:#222;font-weight:bold">Fecha</div>
<div class="t" style="left:859px;width:55px;text-align:center;top:881.14px;font-size:7.33px;line-height:9.53px;color:#222;font-weight:bold">Hora</div>
<div class="t" style="left:915px;width:170px;text-align:center;top:881.14px;font-size:7.33px;line-height:9.53px;color:#222;font-weight:bold">Profesional</div>
<div class="t" style="left:1086px;width:36px;text-align:center;top:881.14px;font-size:7.33px;line-height:9.53px;color:#222;font-weight:bold">Aplicadas</div>
<div class="t" style="left:1123px;width:34px;text-align:center;top:881.14px;font-size:7.33px;line-height:9.53px;color:#222;font-weight:bold">Observar</div>
<div class="t" style="left:1158px;width:42px;text-align:center;top:881.14px;font-size:7.33px;line-height:9.53px;color:#222;font-weight:bold">Seleccionar</div>
<div style="left:63px;top:897px;width:1139px;height:23.299999999999955px;background:#b4def7;"></div>
<div style="left:115px;top:897px;width:1px;height:23.299999999999955px;background:#d5ecfa"></div>
<div style="left:613px;top:897px;width:1px;height:23.299999999999955px;background:#d5ecfa"></div>
<div style="left:650px;top:897px;width:1px;height:23.299999999999955px;background:#d5ecfa"></div>
<div style="left:681px;top:897px;width:1px;height:23.299999999999955px;background:#d5ecfa"></div>
<div style="left:724px;top:897px;width:1px;height:23.299999999999955px;background:#d5ecfa"></div>
<div style="left:767px;top:897px;width:1px;height:23.299999999999955px;background:#d5ecfa"></div>
<div style="left:859px;top:897px;width:1px;height:23.299999999999955px;background:#d5ecfa"></div>
<div style="left:915px;top:897px;width:1px;height:23.299999999999955px;background:#d5ecfa"></div>
<div style="left:1086px;top:897px;width:1px;height:23.299999999999955px;background:#d5ecfa"></div>
<div style="left:1123px;top:897px;width:1px;height:23.299999999999955px;background:#d5ecfa"></div>
<div style="left:1158px;top:897px;width:1px;height:23.299999999999955px;background:#d5ecfa"></div>
<div class="t" style="left:67px;top:899.4px;font-size:7.33px;line-height:8.9px;color:#050505">MEDQX-<br>1075</div>
<div class="t" style="left:118.5px;top:903.64px;font-size:7.33px;line-height:9.53px;color:#050505;font-weight:normal;">AGUJA HIPODÉRMICA NO 18 DESECHABLE INVIMA 2013DM-0010773</div>
<div class="t" style="left:617px;top:903.64px;font-size:7.33px;line-height:9.53px;color:#050505;font-weight:normal;">CE</div>
<div class="t" style="left:653.8px;top:903.64px;font-size:7.33px;line-height:9.53px;color:#050505;font-weight:normal;">1</div>
<div class="t" style="left:684.7px;top:903.64px;font-size:7.33px;line-height:9.53px;color:#050505;font-weight:normal;">1</div>
<div style="left:63px;top:920.3px;width:661px;height:4.7999999999999545px;background:#f2f2f1;"></div>
<div style="left:724px;top:920.3px;width:478px;height:4.7999999999999545px;background:#ffffff;"></div>
<div style="left:63px;top:925.0999999999999px;width:1023px;height:14.900000000000091px;background:#fafaf8;"></div>
<div style="left:1086px;top:925.0999999999999px;width:116px;height:14.900000000000091px;background:#ffffff;"></div>
<div style="left:1086px;top:925.0999999999999px;width:1px;height:14.900000000000091px;background:#d8ecf8;"></div>
<div style="left:1123px;top:925.0999999999999px;width:1px;height:14.900000000000091px;background:#d8ecf8;"></div>
<div style="left:1158px;top:925.0999999999999px;width:1px;height:14.900000000000091px;background:#d8ecf8;"></div>
<div class="t" style="left:1090px;top:927.64px;font-size:7.33px;line-height:9.53px;color:#050505;font-weight:bold;">0</div>
<div style="left:63px;top:940px;width:1139px;height:23.299999999999955px;background:#d5ecfa;"></div>
<div style="left:115px;top:940px;width:1px;height:23.299999999999955px;background:#d5ecfa"></div>
<div style="left:613px;top:940px;width:1px;height:23.299999999999955px;background:#d5ecfa"></div>
<div style="left:650px;top:940px;width:1px;height:23.299999999999955px;background:#d5ecfa"></div>
<div style="left:681px;top:940px;width:1px;height:23.299999999999955px;background:#d5ecfa"></div>
<div style="left:724px;top:940px;width:1px;height:23.299999999999955px;background:#d5ecfa"></div>
<div style="left:767px;top:940px;width:1px;height:23.299999999999955px;background:#d5ecfa"></div>
<div style="left:859px;top:940px;width:1px;height:23.299999999999955px;background:#d5ecfa"></div>
<div style="left:915px;top:940px;width:1px;height:23.299999999999955px;background:#d5ecfa"></div>
<div style="left:1086px;top:940px;width:1px;height:23.299999999999955px;background:#d5ecfa"></div>
<div style="left:1123px;top:940px;width:1px;height:23.299999999999955px;background:#d5ecfa"></div>
<div style="left:1158px;top:940px;width:1px;height:23.299999999999955px;background:#d5ecfa"></div>
<div class="t" style="left:67px;top:942.4px;font-size:7.33px;line-height:8.9px;color:#050505">MEDQX-<br>1063</div>
<div class="t" style="left:118.5px;top:946.64px;font-size:7.33px;line-height:9.53px;color:#050505;font-weight:normal;">ALCOHOL ANTISÉPTICO OSA INVIMA 2020 M- 009828- R2 72.9 SH - SOLUCIONES</div>
<div class="t" style="left:617px;top:946.64px;font-size:7.33px;line-height:9.53px;color:#050505;font-weight:normal;">CE</div>
<div class="t" style="left:653.8px;top:946.64px;font-size:7.33px;line-height:9.53px;color:#050505;font-weight:normal;">1</div>
<div class="t" style="left:684.7px;top:946.64px;font-size:7.33px;line-height:9.53px;color:#050505;font-weight:normal;">1</div>
<div style="left:63px;top:963.3px;width:661px;height:4.7999999999999545px;background:#f2f2f1;"></div>
<div style="left:724px;top:963.3px;width:478px;height:4.7999999999999545px;background:#ffffff;"></div>
<div style="left:63px;top:968.0999999999999px;width:1023px;height:14.900000000000091px;background:#fafaf8;"></div>
<div style="left:1086px;top:968.0999999999999px;width:116px;height:14.900000000000091px;background:#ffffff;"></div>
<div style="left:1086px;top:968.0999999999999px;width:1px;height:14.900000000000091px;background:#d8ecf8;"></div>
<div style="left:1123px;top:968.0999999999999px;width:1px;height:14.900000000000091px;background:#d8ecf8;"></div>
<div style="left:1158px;top:968.0999999999999px;width:1px;height:14.900000000000091px;background:#d8ecf8;"></div>
<div class="t" style="left:1090px;top:970.64px;font-size:7.33px;line-height:9.53px;color:#050505;font-weight:bold;">0</div>
<div style="left:63px;top:983px;width:1139px;height:23.299999999999955px;background:#b4def7;"></div>
<div style="left:115px;top:983px;width:1px;height:23.299999999999955px;background:#d5ecfa"></div>
<div style="left:613px;top:983px;width:1px;height:23.299999999999955px;background:#d5ecfa"></div>
<div style="left:650px;top:983px;width:1px;height:23.299999999999955px;background:#d5ecfa"></div>
<div style="left:681px;top:983px;width:1px;height:23.299999999999955px;background:#d5ecfa"></div>
<div style="left:724px;top:983px;width:1px;height:23.299999999999955px;background:#d5ecfa"></div>
<div style="left:767px;top:983px;width:1px;height:23.299999999999955px;background:#d5ecfa"></div>
<div style="left:859px;top:983px;width:1px;height:23.299999999999955px;background:#d5ecfa"></div>
<div style="left:915px;top:983px;width:1px;height:23.299999999999955px;background:#d5ecfa"></div>
<div style="left:1086px;top:983px;width:1px;height:23.299999999999955px;background:#d5ecfa"></div>
<div style="left:1123px;top:983px;width:1px;height:23.299999999999955px;background:#d5ecfa"></div>
<div style="left:1158px;top:983px;width:1px;height:23.299999999999955px;background:#d5ecfa"></div>
<div class="t" style="left:67px;top:985.4px;font-size:7.33px;line-height:8.9px;color:#050505">MEDQX-<br>1120</div>
<div style="left:63px;top:1006.3px;width:661px;height:4.7999999999999545px;background:#f2f2f1;"></div>
<div style="left:724px;top:1006.3px;width:478px;height:4.7999999999999545px;background:#ffffff;"></div>
<div style="left:63px;top:1011.0999999999999px;width:1023px;height:14.900000000000091px;background:#fafaf8;"></div>
<div style="left:1086px;top:1011.0999999999999px;width:116px;height:14.900000000000091px;background:#ffffff;"></div>
<div style="left:1086px;top:1011.0999999999999px;width:1px;height:14.900000000000091px;background:#d8ecf8;"></div>
<div style="left:1123px;top:1011.0999999999999px;width:1px;height:14.900000000000091px;background:#d8ecf8;"></div>
<div style="left:1158px;top:1011.0999999999999px;width:1px;height:14.900000000000091px;background:#d8ecf8;"></div>
<div class="t" style="left:1090px;top:1013.64px;font-size:7.33px;line-height:9.53px;color:#050505;font-weight:bold;">0</div>
<div style="left:0px;top:992px;width:1280px;height:32px;background:#ffffff;"></div>
</body></html>
